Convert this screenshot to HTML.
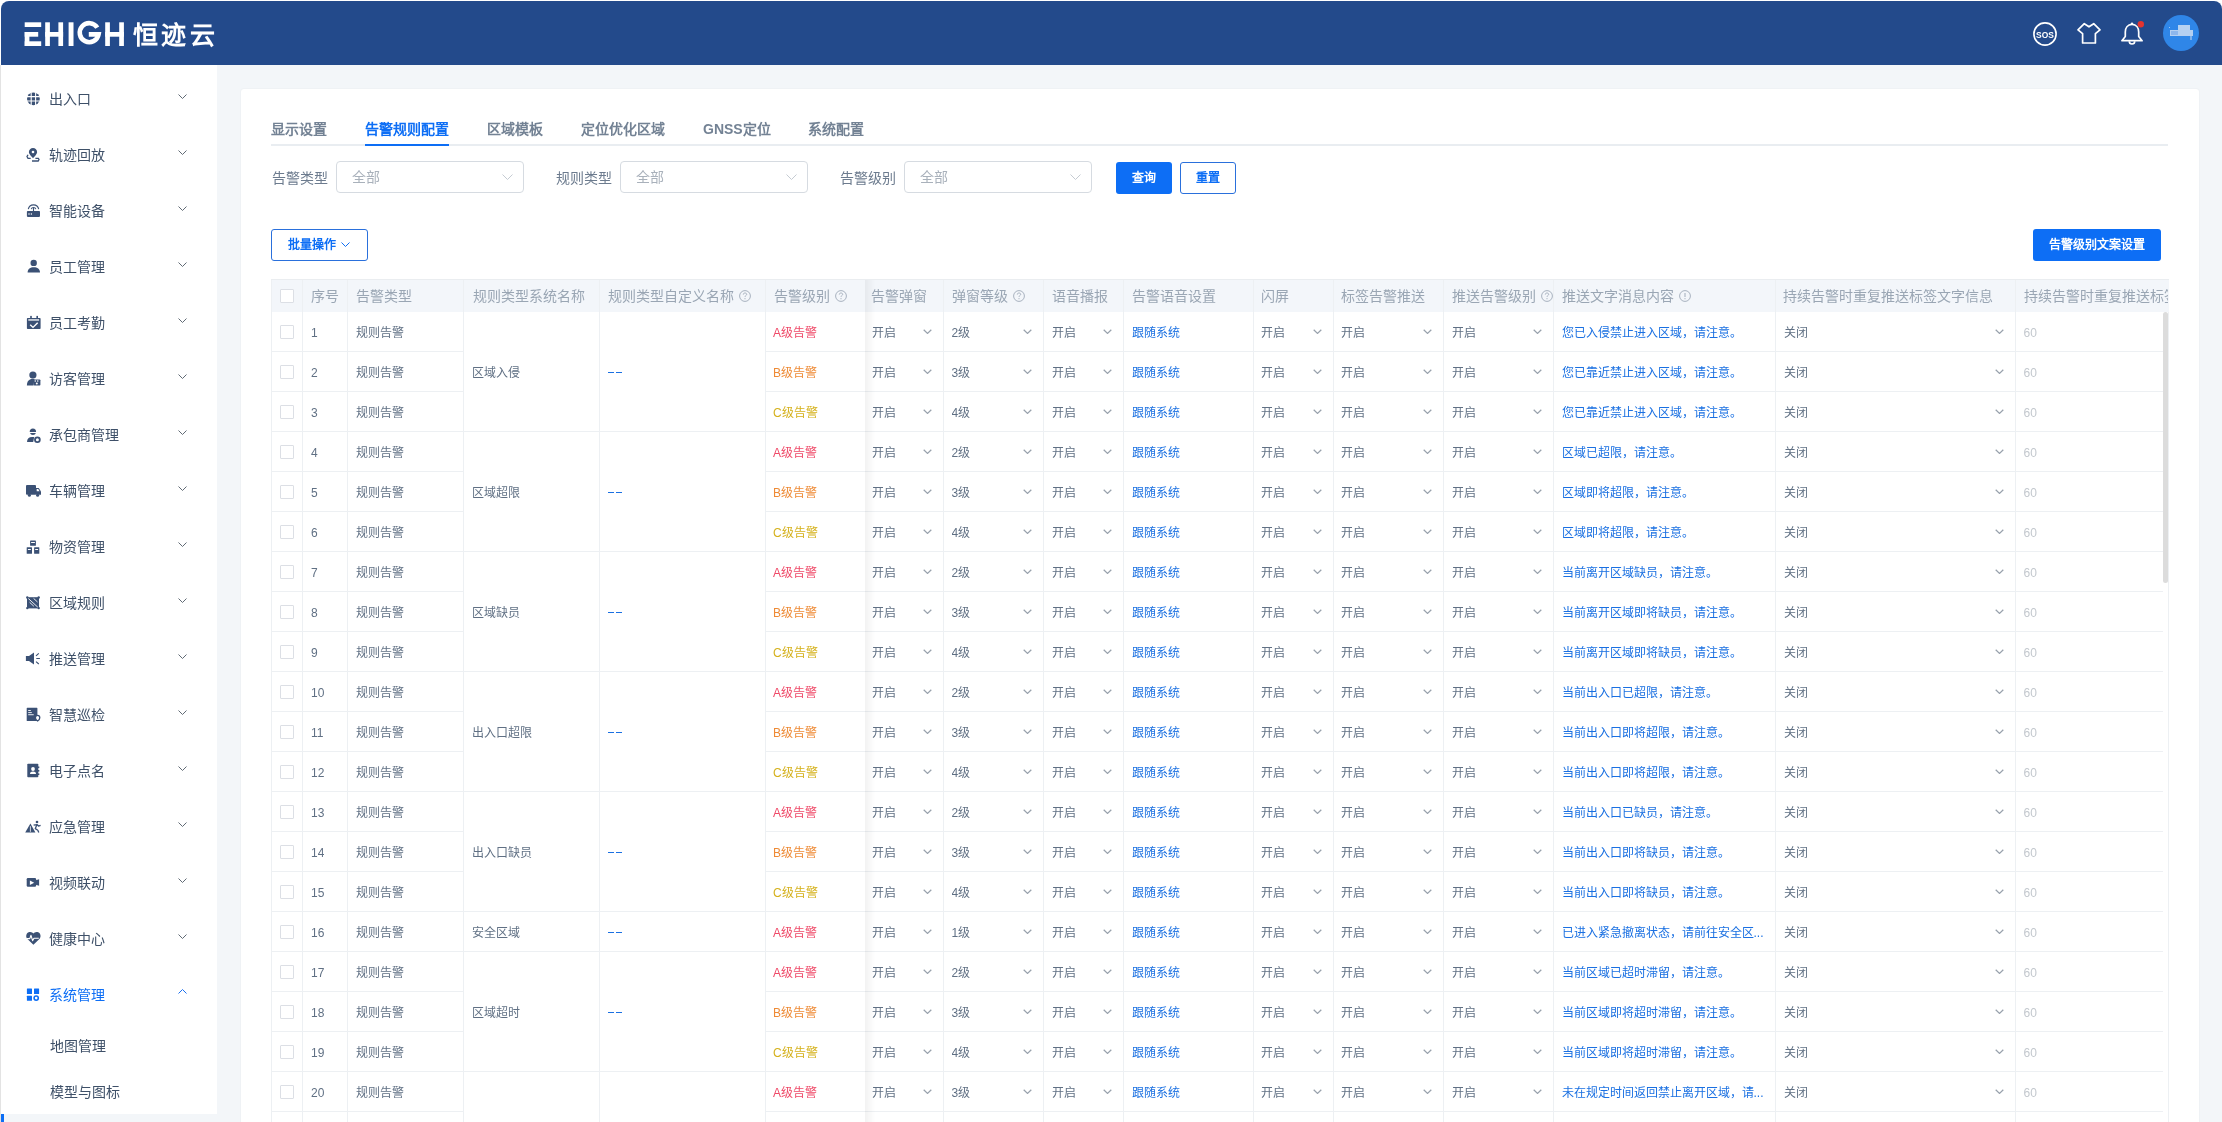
<!DOCTYPE html>
<html lang="zh-CN"><head><meta charset="utf-8"><title>告警规则配置</title><style>
*{box-sizing:border-box;margin:0;padding:0}
html,body{width:2222px;height:1122px;overflow:hidden;background:#fff;font-family:"Liberation Sans",sans-serif}
.abs{position:absolute}
.hdr{position:absolute;left:1px;top:1px;right:0;height:64px;background:#234a8b;border-radius:8px 8px 0 0}
.side{position:absolute;left:0;top:65px;width:217px;height:1049px;background:#fff;border-left:1px solid #e3e3e3}
.mainbg{position:absolute;left:0;top:65px;right:0;bottom:0;background:#f3f6f9}
.card{position:absolute;left:241px;top:89px;width:1958px;height:1100px;background:#fff;border-radius:3px;box-shadow:0 0 2px rgba(0,0,0,0.07)}
.mi{position:absolute;left:0;width:217px;height:40px;font-size:14px;line-height:40px;color:#3e5068}
.mi .t{position:absolute;left:49px;top:1px}
.mi svg.ic{position:absolute;left:26px;top:13px}
.mi svg.ch{position:absolute;left:178px;top:16px}
.tab{position:absolute;top:119px;font-size:14px;line-height:20px;color:#738294;font-weight:bold}
.lbl{position:absolute;top:168px;font-size:14px;line-height:20px;color:#6c7b8e}
.sel{position:absolute;top:161px;height:32px;width:188px;border:1px solid #d6dbe1;border-radius:4px;font-size:14px;line-height:30px;color:#a9b1bb;padding-left:15px}
.sel svg{position:absolute;right:10px;top:12px}
.btn{position:absolute;height:32px;border-radius:3px;font-size:12px;line-height:30px;font-weight:bold;text-align:center}
.th{position:absolute;top:279px;height:33px;font-size:14px;line-height:35px;color:#9aa6b4;white-space:nowrap;overflow:hidden}
.td{position:absolute;height:41px;font-size:12px;line-height:40px;padding-top:1px;color:#607084;white-space:nowrap;overflow:hidden}
.vl{position:absolute;width:1px;background:#edf0f3}
.hl{position:absolute;height:1px;background:#edf0f3}
</style></head>
<body>
<div style="position:absolute;left:0;top:0;width:2222px;height:1122px;overflow:hidden;will-change:transform">
<div class="mainbg"></div><div class="hdr"></div><svg class="abs" style="left:24px;top:20px" width="200" height="30" viewBox="0 0 200 30">
<g fill="#fff">
<rect x="0.7" y="2.3" width="16.5" height="4.7"/><rect x="0.7" y="12" width="13.5" height="4.7"/><rect x="0.7" y="21.3" width="16.5" height="4.7"/><rect x="0.7" y="12" width="4.7" height="14"/>
<rect x="21.2" y="2.3" width="4.7" height="23.7"/><rect x="34.4" y="2.3" width="4.7" height="23.7"/><rect x="21.2" y="12" width="17.9" height="4.7"/>
<rect x="44.6" y="2.3" width="4.9" height="23.7"/>
<rect x="81.2" y="2.3" width="4.7" height="23.7"/><rect x="95.2" y="2.3" width="4.7" height="23.7"/><rect x="81.2" y="12" width="18.7" height="4.7"/>
</g>
<path d="M73.3 7.6 A9.5 9.5 0 1 0 74.6 14.35 L64.8 14.35" fill="none" stroke="#fff" stroke-width="4.6"/>
<text x="109" y="23.8" font-size="25" font-weight="bold" fill="#fff" letter-spacing="3.3" font-family="Liberation Sans">恒迹云</text>
</svg>
<svg class="abs" style="left:2033px;top:22px" width="24" height="24" viewBox="0 0 24 24"><circle cx="12" cy="12" r="11.1" fill="none" stroke="#fff" stroke-width="1.6"/><text x="3.1" y="16" textLength="17.8" lengthAdjust="spacingAndGlyphs" font-size="9.6" font-weight="bold" fill="#fff" font-family="Liberation Sans">SOS</text></svg>
<svg class="abs" style="left:2075px;top:20px" width="28" height="28" viewBox="0 0 28 28"><path d="M9.3 3.7 L14 6.8 L18.7 3.7 L25 9.8 L20.4 13.6 L20.4 23 L7.6 23 L7.6 13.6 L3 9.8 Z" fill="none" stroke="#fff" stroke-width="1.7" stroke-linejoin="round"/></svg>
<svg class="abs" style="left:2118px;top:20px" width="28" height="28" viewBox="0 0 28 28"><path d="M14 4.4 C9.6 4.4 7.3 8 7.3 12 L7.3 16.5 L3.9 20.7 L24.1 20.7 L20.7 16.5 L20.7 12 C20.7 8 18.4 4.4 14 4.4 Z" fill="none" stroke="#fff" stroke-width="1.7" stroke-linejoin="round"/><path d="M11.3 21.3 A2.7 2.7 0 0 0 16.7 21.3" fill="none" stroke="#fff" stroke-width="1.7"/><circle cx="14" cy="3.6" r="1.2" fill="#fff"/><circle cx="22.8" cy="4.2" r="3.2" fill="#e5342f"/></svg>
<div class="abs" style="left:2163px;top:15px;width:36px;height:36px;border-radius:50%;background:#2f86e8;overflow:hidden">
<div class="abs" style="left:7px;top:15px;width:23px;height:6px;background:#b4cff1"></div>
<div class="abs" style="left:8px;top:16px;width:7px;height:4px;background:#8db6ec"></div>
<div class="abs" style="left:15px;top:10px;width:12px;height:5px;background:#b6d2f2"></div>
<div class="abs" style="left:27px;top:21px;width:2px;height:4px;background:#7fb0ea"></div>
<div class="abs" style="left:6px;top:12px;width:1px;height:1px;background:#9cc4f0"></div>
</div>
<div class="side"></div><svg class="abs" style="left:20px;top:84px" width="28" height="28" viewBox="20 84 28 28"><circle cx="33.4" cy="98.8" r="6.4" fill="#3b5175"/><path d="M31.2 92.5V105.1M35.6 92.5V105.1M27 96.6H39.8M27 101H39.8" stroke="#fff" stroke-width="1.1"/></svg><div class="mi" style="top:78px;color:#3e5068"><span class="t">出入口</span><svg class="ch" width="9" height="5" viewBox="0 0 9 5" style="top:16px"><path d="M0.5 0.5 L4.5 4.5 L8.5 0.5" fill="none" stroke="#606a75" stroke-width="1"/></svg></div><svg class="abs" style="left:20px;top:140px" width="28" height="28" viewBox="20 140 28 28"><path d="M33 148C30.6 148 28.9 149.8 28.9 152.1 28.9 154.6 33 158.2 33 158.2S37.1 154.6 37.1 152.1C37.1 149.8 35.4 148 33 148Z" fill="#3b5175"/><circle cx="33" cy="152" r="1.3" fill="#fff"/><path d="M28 154.8 L27 156.6 L28 158.3 L30.7 158.3 M35.4 158.3 L38.3 158.3 L39 159.6 L38.2 161 L32 161" fill="none" stroke="#3b5175" stroke-width="1.3"/></svg><div class="mi" style="top:134px;color:#3e5068"><span class="t">轨迹回放</span><svg class="ch" width="9" height="5" viewBox="0 0 9 5" style="top:16px"><path d="M0.5 0.5 L4.5 4.5 L8.5 0.5" fill="none" stroke="#606a75" stroke-width="1"/></svg></div><svg class="abs" style="left:20px;top:196px" width="28" height="28" viewBox="20 196 28 28"><path d="M28.3 209.2 A5.3 5.3 0 0 1 38.7 209.2" fill="none" stroke="#3b5175" stroke-width="1.1"/><path d="M31.2 209.2 A2.4 2.4 0 0 1 35.8 209.2" fill="none" stroke="#3b5175" stroke-width="1.1"/><path d="M33.5 208 V211.5" stroke="#3b5175" stroke-width="1.1"/><rect x="26.9" y="211" width="13.1" height="5.9" rx="0.8" fill="#3b5175"/><circle cx="29" cy="214" r="0.75" fill="#fff"/><circle cx="31.4" cy="214" r="0.75" fill="#fff"/></svg><div class="mi" style="top:190px;color:#3e5068"><span class="t">智能设备</span><svg class="ch" width="9" height="5" viewBox="0 0 9 5" style="top:16px"><path d="M0.5 0.5 L4.5 4.5 L8.5 0.5" fill="none" stroke="#606a75" stroke-width="1"/></svg></div><svg class="abs" style="left:20px;top:252px" width="28" height="28" viewBox="20 252 28 28"><circle cx="33.7" cy="262.9" r="3.2" fill="#3b5175"/><path d="M27.6 272.6 C27.6 268.9 30.3 267.2 33.8 267.2 C37.3 267.2 40 268.9 40 272.6 Z" fill="#3b5175"/></svg><div class="mi" style="top:246px;color:#3e5068"><span class="t">员工管理</span><svg class="ch" width="9" height="5" viewBox="0 0 9 5" style="top:16px"><path d="M0.5 0.5 L4.5 4.5 L8.5 0.5" fill="none" stroke="#606a75" stroke-width="1"/></svg></div><svg class="abs" style="left:20px;top:308px" width="28" height="28" viewBox="20 308 28 28"><rect x="26.9" y="317.9" width="13.7" height="11.1" rx="0.8" fill="#3b5175"/><rect x="30.2" y="315.9" width="1.6" height="2.5" fill="#3b5175"/><rect x="36.4" y="315.9" width="1.6" height="2.5" fill="#3b5175"/><rect x="28.3" y="319.3" width="10.8" height="1.3" fill="#fff"/><path d="M30.2 324.8 L33 327.4 L37.7 322.7" fill="none" stroke="#fff" stroke-width="1.4"/></svg><div class="mi" style="top:302px;color:#3e5068"><span class="t">员工考勤</span><svg class="ch" width="9" height="5" viewBox="0 0 9 5" style="top:16px"><path d="M0.5 0.5 L4.5 4.5 L8.5 0.5" fill="none" stroke="#606a75" stroke-width="1"/></svg></div><svg class="abs" style="left:20px;top:364px" width="28" height="28" viewBox="20 364 28 28"><circle cx="32.9" cy="375" r="3.6" fill="#3b5175"/><path d="M26.9 385.5 C26.9 381 29.5 378.8 33 378.8 L34.5 379 L33.5 385.5 Z" fill="#3b5175"/><rect x="33.6" y="379.4" width="6.8" height="6.1" rx="0.8" fill="#3b5175"/><rect x="34.6" y="380.4" width="1.4" height="1.2" fill="#fff"/><rect x="37" y="380.4" width="1.4" height="1.2" fill="#fff"/><circle cx="36.8" cy="383.6" r="1" fill="#fff"/></svg><div class="mi" style="top:358px;color:#3e5068"><span class="t">访客管理</span><svg class="ch" width="9" height="5" viewBox="0 0 9 5" style="top:16px"><path d="M0.5 0.5 L4.5 4.5 L8.5 0.5" fill="none" stroke="#606a75" stroke-width="1"/></svg></div><svg class="abs" style="left:20px;top:420px" width="28" height="28" viewBox="20 420 28 28"><path d="M29.7 432 A3.2 3.6 0 0 1 36.1 432 Z" fill="#3b5175"/><path d="M30 433 A3.1 3 0 0 0 35.9 433 Z" fill="#3b5175"/><path d="M27 441.9 C27 438.8 29 437 32 437 L34.2 437 L33.2 441.9 Z" fill="#3b5175"/><circle cx="37.4" cy="439.8" r="2.4" fill="none" stroke="#3b5175" stroke-width="1.8"/></svg><div class="mi" style="top:414px;color:#3e5068"><span class="t">承包商管理</span><svg class="ch" width="9" height="5" viewBox="0 0 9 5" style="top:16px"><path d="M0.5 0.5 L4.5 4.5 L8.5 0.5" fill="none" stroke="#606a75" stroke-width="1"/></svg></div><svg class="abs" style="left:20px;top:476px" width="28" height="28" viewBox="20 476 28 28"><rect x="26" y="485" width="10" height="9.7" rx="1" fill="#3b5175"/><path d="M35.5 488 L38.7 488 L41 491.5 L41 494.7 L35.5 494.7 Z" fill="#3b5175"/><path d="M36.7 489.1 L38.2 489.1 L39.6 491.3 L36.7 491.3Z" fill="#fff"/><circle cx="29.4" cy="495.3" r="1.5" fill="#3b5175"/><circle cx="37.6" cy="495.3" r="1.5" fill="#3b5175"/></svg><div class="mi" style="top:470px;color:#3e5068"><span class="t">车辆管理</span><svg class="ch" width="9" height="5" viewBox="0 0 9 5" style="top:16px"><path d="M0.5 0.5 L4.5 4.5 L8.5 0.5" fill="none" stroke="#606a75" stroke-width="1"/></svg></div><svg class="abs" style="left:20px;top:532px" width="28" height="28" viewBox="20 532 28 28"><rect x="30.1" y="540.4" width="5.8" height="5.4" rx="0.5" fill="#3b5175"/><rect x="26.7" y="547.3" width="5.3" height="6.4" rx="0.5" fill="#3b5175"/><rect x="34.1" y="547.3" width="5.2" height="6.4" rx="0.5" fill="#3b5175"/><rect x="31.1" y="542" width="3.8" height="1" fill="#fff"/><rect x="27.9" y="549" width="2.9" height="1" fill="#fff"/><rect x="35.2" y="549" width="2.9" height="1" fill="#fff"/></svg><div class="mi" style="top:526px;color:#3e5068"><span class="t">物资管理</span><svg class="ch" width="9" height="5" viewBox="0 0 9 5" style="top:16px"><path d="M0.5 0.5 L4.5 4.5 L8.5 0.5" fill="none" stroke="#606a75" stroke-width="1"/></svg></div><svg class="abs" style="left:20px;top:588px" width="28" height="28" viewBox="20 588 28 28"><rect x="27" y="597.2" width="12" height="11.2" fill="#3b5175"/><path d="M28.3 598.5 L37.8 607.2 M29.6 602.3 L33.8 606.2 M33.6 598.4 L37.5 602" stroke="#fff" stroke-width="0.9"/><circle cx="27.3" cy="597.5" r="1.2" fill="#3b5175"/><circle cx="38.7" cy="597.5" r="1.2" fill="#3b5175"/><circle cx="27.3" cy="608.1" r="1.2" fill="#3b5175"/><circle cx="38.7" cy="608.1" r="1.2" fill="#3b5175"/></svg><div class="mi" style="top:582px;color:#3e5068"><span class="t">区域规则</span><svg class="ch" width="9" height="5" viewBox="0 0 9 5" style="top:16px"><path d="M0.5 0.5 L4.5 4.5 L8.5 0.5" fill="none" stroke="#606a75" stroke-width="1"/></svg></div><svg class="abs" style="left:20px;top:644px" width="28" height="28" viewBox="20 644 28 28"><path d="M25.9 656 H29 L34 652.4 V664.6 L29 661 H25.9 Z" fill="#3b5175"/><path d="M36 655.8 L38.8 653.3 M36.3 658.5 H39.9 M36 661.6 L38.8 664" stroke="#3b5175" stroke-width="1.1"/></svg><div class="mi" style="top:638px;color:#3e5068"><span class="t">推送管理</span><svg class="ch" width="9" height="5" viewBox="0 0 9 5" style="top:16px"><path d="M0.5 0.5 L4.5 4.5 L8.5 0.5" fill="none" stroke="#606a75" stroke-width="1"/></svg></div><svg class="abs" style="left:20px;top:700px" width="28" height="28" viewBox="20 700 28 28"><rect x="26.7" y="707.8" width="10.7" height="13.2" rx="0.6" fill="#3b5175"/><rect x="28.2" y="710" width="2.6" height="0.9" fill="#fff"/><rect x="28.2" y="712.2" width="3.6" height="0.9" fill="#fff"/><rect x="28.2" y="714.3" width="5.5" height="0.9" fill="#fff"/><path d="M37.6 715.4 C36.3 715.4 35.4 716.5 35.4 717.7 C35.4 719.5 37.6 721 37.6 721 C37.6 721 39.8 719.5 39.8 717.7 C39.8 716.5 38.9 715.4 37.6 715.4Z" fill="#fff" stroke="#3b5175" stroke-width="1.3"/></svg><div class="mi" style="top:694px;color:#3e5068"><span class="t">智慧巡检</span><svg class="ch" width="9" height="5" viewBox="0 0 9 5" style="top:16px"><path d="M0.5 0.5 L4.5 4.5 L8.5 0.5" fill="none" stroke="#606a75" stroke-width="1"/></svg></div><svg class="abs" style="left:20px;top:756px" width="28" height="28" viewBox="20 756 28 28"><rect x="27.3" y="763.8" width="11" height="13.4" rx="0.8" fill="#3b5175"/><rect x="38" y="766.5" width="1.3" height="1.6" fill="#3b5175"/><rect x="38" y="770" width="1.3" height="1.6" fill="#3b5175"/><rect x="38" y="773.4" width="1.3" height="1.6" fill="#3b5175"/><circle cx="33" cy="769" r="1.9" fill="#fff"/><path d="M30 774 C30 772.3 31.3 771.6 33 771.6 C34.7 771.6 36 772.3 36 774 Z" fill="#fff"/></svg><div class="mi" style="top:750px;color:#3e5068"><span class="t">电子点名</span><svg class="ch" width="9" height="5" viewBox="0 0 9 5" style="top:16px"><path d="M0.5 0.5 L4.5 4.5 L8.5 0.5" fill="none" stroke="#606a75" stroke-width="1"/></svg></div><svg class="abs" style="left:20px;top:812px" width="28" height="28" viewBox="20 812 28 28"><path d="M25.2 832.6 L30.4 823.6 L35.4 832.6 Z" fill="#3b5175"/><path d="M30.4 826.2 V831.8" stroke="#fff" stroke-width="0.8"/><circle cx="37" cy="822" r="1.3" fill="#3b5175"/><path d="M33.6 825.2 L37 824.6 L38.5 826 L40.6 825.4 M37 824.6 L35.3 828.6 L37.8 830.2 L38.8 832.6" fill="none" stroke="#3b5175" stroke-width="1.3" stroke-linejoin="round"/></svg><div class="mi" style="top:806px;color:#3e5068"><span class="t">应急管理</span><svg class="ch" width="9" height="5" viewBox="0 0 9 5" style="top:16px"><path d="M0.5 0.5 L4.5 4.5 L8.5 0.5" fill="none" stroke="#606a75" stroke-width="1"/></svg></div><svg class="abs" style="left:20px;top:868px" width="28" height="28" viewBox="20 868 28 28"><rect x="26.7" y="878.1" width="9.4" height="8.6" rx="1.2" fill="#3b5175"/><path d="M35.6 880.2 L39.1 879.2 V885.8 L35.6 884.8 Z" fill="#3b5175"/><path d="M29.9 880.5 L34.2 882.7 L29.9 885 Z" fill="#fff"/></svg><div class="mi" style="top:862px;color:#3e5068"><span class="t">视频联动</span><svg class="ch" width="9" height="5" viewBox="0 0 9 5" style="top:16px"><path d="M0.5 0.5 L4.5 4.5 L8.5 0.5" fill="none" stroke="#606a75" stroke-width="1"/></svg></div><svg class="abs" style="left:20px;top:924px" width="28" height="28" viewBox="20 924 28 28"><path d="M33.4 944.8 L27.4 939 C25.6 937.2 25.8 933.6 28.6 932.3 C30.8 931.3 32.6 932.6 33.4 933.6 C34.2 932.6 36 931.3 38.2 932.3 C41 933.6 41.2 937.2 39.4 939 Z" fill="#3b5175"/><path d="M26.5 938.6 H29.8 L31 935.3 L32.6 940.6 L34 938.3 H38.8" fill="none" stroke="#fff" stroke-width="1.1" stroke-linejoin="round"/></svg><div class="mi" style="top:918px;color:#3e5068"><span class="t">健康中心</span><svg class="ch" width="9" height="5" viewBox="0 0 9 5" style="top:16px"><path d="M0.5 0.5 L4.5 4.5 L8.5 0.5" fill="none" stroke="#606a75" stroke-width="1"/></svg></div><svg class="abs" style="left:20px;top:980px" width="28" height="28" viewBox="20 980 28 28"><rect x="26.9" y="988.4" width="5.1" height="5.6" rx="0.5" fill="#0d6ef5"/><rect x="34" y="988.4" width="5.1" height="5.6" rx="0.5" fill="#0d6ef5"/><rect x="26.9" y="995.7" width="5.1" height="5.1" rx="0.5" fill="#0d6ef5"/><circle cx="36.2" cy="998.1" r="2.1" fill="none" stroke="#0d6ef5" stroke-width="1.6"/></svg><div class="mi" style="top:974px;color:#0d6ef5"><span class="t">系统管理</span><svg class="ch" width="9" height="5" viewBox="0 0 9 5" style="top:15px"><path d="M0.5 4.5 L4.5 0.5 L8.5 4.5" fill="none" stroke="#1a6ff0" stroke-width="1"/></svg></div><div class="mi" style="top:1025px"><span class="t" style="left:50px">地图管理</span></div><div class="mi" style="top:1071px"><span class="t" style="left:50px">模型与图标</span></div><div class="abs" style="left:1px;top:1114px;width:3px;height:8px;background:#0d6ef5"></div><div class="abs" style="left:0;top:1114px;width:1px;height:8px;background:#e3e3e3"></div><div class="card"></div><div class="abs" style="left:271px;top:144px;width:1897px;height:2px;background:#e9edf1"></div><div class="tab" style="left:271px;color:#738294">显示设置</div><div class="tab" style="left:365px;color:#0d6ef5">告警规则配置</div><div class="tab" style="left:487px;color:#738294">区域模板</div><div class="tab" style="left:581px;color:#738294">定位优化区域</div><div class="tab" style="left:703px;color:#738294">GNSS定位</div><div class="tab" style="left:808px;color:#738294">系统配置</div><div class="abs" style="left:365px;top:144px;width:84px;height:2px;background:#0d6ef5"></div><div class="lbl" style="left:272px">告警类型</div><div class="sel" style="left:336px">全部<svg width="11" height="6" viewBox="0 0 11 6" style="position:absolute;right:10px;top:12px"><path d="M0.5 0.5 L5.5 5.5 L10.5 0.5" fill="none" stroke="#c5cbd2" stroke-width="1"/></svg></div><div class="lbl" style="left:556px">规则类型</div><div class="sel" style="left:620px">全部<svg width="11" height="6" viewBox="0 0 11 6" style="position:absolute;right:10px;top:12px"><path d="M0.5 0.5 L5.5 5.5 L10.5 0.5" fill="none" stroke="#c5cbd2" stroke-width="1"/></svg></div><div class="lbl" style="left:840px">告警级别</div><div class="sel" style="left:904px">全部<svg width="11" height="6" viewBox="0 0 11 6" style="position:absolute;right:10px;top:12px"><path d="M0.5 0.5 L5.5 5.5 L10.5 0.5" fill="none" stroke="#c5cbd2" stroke-width="1"/></svg></div><div class="btn" style="left:1116px;top:162px;width:56px;background:#0d6ef5;color:#fff;line-height:32px">查询</div><div class="btn" style="left:1180px;top:162px;width:56px;border:1px solid #2a70dc;color:#0d6ef5">重置</div><div class="btn" style="left:271px;top:229px;width:97px;border:1px solid #2a70dc;color:#0d6ef5;text-align:left;padding-left:16px">批量操作<svg width="9" height="5" viewBox="0 0 9 5" style="position:absolute;left:69px;top:12px"><path d="M0.5 0.5 L4.5 4.5 L8.5 0.5" fill="none" stroke="#0d6ef5" stroke-width="1"/></svg></div><div class="btn" style="left:2033px;top:229px;width:128px;background:#0d6ef5;color:#fff;line-height:32px">告警级别文案设置</div><div class="abs" style="left:271px;top:279px;width:1897.5px;height:32.5px;background:#f3f6fa"></div><div class="abs" style="left:280px;top:289px;width:14px;height:14px;border:1px solid #dcdfe5;background:#fff;border-radius:1px"></div><div class="th" style="left:311px;width:36px">序号</div><div class="th" style="left:356px;width:107.5px">告警类型</div><div class="th" style="left:472.5px;width:126.79999999999995px">规则类型系统名称</div><div class="th" style="left:608.3px;width:156.70000000000005px">规则类型自定义名称<svg width="12" height="12" viewBox="0 0 12 12" style="position:relative;top:1px;margin-left:5px"><circle cx="6" cy="6" r="5.4" fill="none" stroke="#a8b2bf" stroke-width="1"/><path d="M4.3 4.6 C4.3 3.5 5 3 6 3 C7 3 7.7 3.6 7.7 4.4 C7.7 5.5 6 5.6 6 6.8" fill="none" stroke="#a8b2bf" stroke-width="1"/><circle cx="6" cy="8.7" r="0.6" fill="#a8b2bf"/></svg></div><div class="th" style="left:774px;width:91.70000000000005px">告警级别<svg width="12" height="12" viewBox="0 0 12 12" style="position:relative;top:1px;margin-left:5px"><circle cx="6" cy="6" r="5.4" fill="none" stroke="#a8b2bf" stroke-width="1"/><path d="M4.3 4.6 C4.3 3.5 5 3 6 3 C7 3 7.7 3.6 7.7 4.4 C7.7 5.5 6 5.6 6 6.8" fill="none" stroke="#a8b2bf" stroke-width="1"/><circle cx="6" cy="8.7" r="0.6" fill="#a8b2bf"/></svg></div><div class="th" style="left:871.2px;width:72.29999999999995px">告警弹窗</div><div class="th" style="left:951.5px;width:92.40000000000009px">弹窗等级<svg width="12" height="12" viewBox="0 0 12 12" style="position:relative;top:1px;margin-left:5px"><circle cx="6" cy="6" r="5.4" fill="none" stroke="#a8b2bf" stroke-width="1"/><path d="M4.3 4.6 C4.3 3.5 5 3 6 3 C7 3 7.7 3.6 7.7 4.4 C7.7 5.5 6 5.6 6 6.8" fill="none" stroke="#a8b2bf" stroke-width="1"/><circle cx="6" cy="8.7" r="0.6" fill="#a8b2bf"/></svg></div><div class="th" style="left:1051.9px;width:71.69999999999982px">语音播报</div><div class="th" style="left:1131.6px;width:121.80000000000018px">告警语音设置</div><div class="th" style="left:1261.4px;width:71.59999999999991px">闪屏</div><div class="th" style="left:1341px;width:102.5px">标签告警推送</div><div class="th" style="left:1451.5px;width:102.0px">推送告警级别<svg width="12" height="12" viewBox="0 0 12 12" style="position:relative;top:1px;margin-left:5px"><circle cx="6" cy="6" r="5.4" fill="none" stroke="#a8b2bf" stroke-width="1"/><path d="M4.3 4.6 C4.3 3.5 5 3 6 3 C7 3 7.7 3.6 7.7 4.4 C7.7 5.5 6 5.6 6 6.8" fill="none" stroke="#a8b2bf" stroke-width="1"/><circle cx="6" cy="8.7" r="0.6" fill="#a8b2bf"/></svg></div><div class="th" style="left:1561.5px;width:213.5px">推送文字消息内容<svg width="12" height="12" viewBox="0 0 12 12" style="position:relative;top:1px;margin-left:5px"><circle cx="6" cy="6" r="5.4" fill="none" stroke="#a8b2bf" stroke-width="1"/><path d="M6 3 V7" stroke="#a8b2bf" stroke-width="1.1"/><circle cx="6" cy="8.7" r="0.6" fill="#a8b2bf"/></svg></div><div class="th" style="left:1783px;width:232.5999999999999px">持续告警时重复推送标签文字信息</div><div class="th" style="left:2023.6px;width:144.9000000000001px">持续告警时重复推送标签文字信息</div><div class="abs" style="left:280px;top:324.5px;width:14px;height:14px;border:1px solid #dcdfe5;background:#fff;border-radius:1px"></div><div class="td" style="left:311px;top:311.5px">1</div><div class="td" style="left:356px;top:311.5px">规则告警</div><div class="td" style="left:472px;top:351.5px">区域入侵</div><div class="abs" style="left:608.3px;top:372.1px;width:6.2px;height:1.4px;background:#1a70e2"></div><div class="abs" style="left:616px;top:372.1px;width:6px;height:1.4px;background:#1a70e2"></div><div class="td" style="left:773px;top:311.5px;color:#ef4a68">A级告警</div><div class="td" style="left:872.2px;top:311.5px;width:68.79999999999995px;color:#607084">开启</div><svg class="abs" style="left:923.0px;top:329.0px" width="9" height="5" viewBox="0 0 9 5"><path d="M0.7 0.7 L4.5 4.4 L8.3 0.7" fill="none" stroke="#98a1ac" stroke-width="1.25"/></svg><div class="td" style="left:951.5px;top:311.5px;width:91.40000000000009px;color:#607084">2级</div><svg class="abs" style="left:1023.4000000000001px;top:329.0px" width="9" height="5" viewBox="0 0 9 5"><path d="M0.7 0.7 L4.5 4.4 L8.3 0.7" fill="none" stroke="#98a1ac" stroke-width="1.25"/></svg><div class="td" style="left:1051.9px;top:311.5px;width:70.69999999999982px;color:#607084">开启</div><svg class="abs" style="left:1103.1px;top:329.0px" width="9" height="5" viewBox="0 0 9 5"><path d="M0.7 0.7 L4.5 4.4 L8.3 0.7" fill="none" stroke="#98a1ac" stroke-width="1.25"/></svg><div class="td" style="left:1131.6px;top:311.5px;color:#1a70e2">跟随系统</div><div class="td" style="left:1261.4px;top:311.5px;width:70.59999999999991px;color:#607084">开启</div><svg class="abs" style="left:1312.5px;top:329.0px" width="9" height="5" viewBox="0 0 9 5"><path d="M0.7 0.7 L4.5 4.4 L8.3 0.7" fill="none" stroke="#98a1ac" stroke-width="1.25"/></svg><div class="td" style="left:1341px;top:311.5px;width:101.5px;color:#607084">开启</div><svg class="abs" style="left:1423.0px;top:329.0px" width="9" height="5" viewBox="0 0 9 5"><path d="M0.7 0.7 L4.5 4.4 L8.3 0.7" fill="none" stroke="#98a1ac" stroke-width="1.25"/></svg><div class="td" style="left:1451.5px;top:311.5px;width:101.0px;color:#607084">开启</div><svg class="abs" style="left:1533.0px;top:329.0px" width="9" height="5" viewBox="0 0 9 5"><path d="M0.7 0.7 L4.5 4.4 L8.3 0.7" fill="none" stroke="#98a1ac" stroke-width="1.25"/></svg><div class="td" style="left:1561.5px;top:311.5px;color:#1a70e2">您已入侵禁止进入区域，请注意。</div><div class="td" style="left:1784px;top:311.5px;width:231.5999999999999px;color:#607084">关闭</div><svg class="abs" style="left:1995.1px;top:329.0px" width="9" height="5" viewBox="0 0 9 5"><path d="M0.7 0.7 L4.5 4.4 L8.3 0.7" fill="none" stroke="#98a1ac" stroke-width="1.25"/></svg><div class="td" style="left:2023.6px;top:311.5px;color:#c3c8ce">60</div><div class="hl" style="left:271px;top:350.5px;width:192.5px"></div><div class="hl" style="left:765px;top:350.5px;width:1398px"></div><div class="abs" style="left:280px;top:364.5px;width:14px;height:14px;border:1px solid #dcdfe5;background:#fff;border-radius:1px"></div><div class="td" style="left:311px;top:351.5px">2</div><div class="td" style="left:356px;top:351.5px">规则告警</div><div class="td" style="left:773px;top:351.5px;color:#ee8a35">B级告警</div><div class="td" style="left:872.2px;top:351.5px;width:68.79999999999995px;color:#607084">开启</div><svg class="abs" style="left:923.0px;top:369.0px" width="9" height="5" viewBox="0 0 9 5"><path d="M0.7 0.7 L4.5 4.4 L8.3 0.7" fill="none" stroke="#98a1ac" stroke-width="1.25"/></svg><div class="td" style="left:951.5px;top:351.5px;width:91.40000000000009px;color:#607084">3级</div><svg class="abs" style="left:1023.4000000000001px;top:369.0px" width="9" height="5" viewBox="0 0 9 5"><path d="M0.7 0.7 L4.5 4.4 L8.3 0.7" fill="none" stroke="#98a1ac" stroke-width="1.25"/></svg><div class="td" style="left:1051.9px;top:351.5px;width:70.69999999999982px;color:#607084">开启</div><svg class="abs" style="left:1103.1px;top:369.0px" width="9" height="5" viewBox="0 0 9 5"><path d="M0.7 0.7 L4.5 4.4 L8.3 0.7" fill="none" stroke="#98a1ac" stroke-width="1.25"/></svg><div class="td" style="left:1131.6px;top:351.5px;color:#1a70e2">跟随系统</div><div class="td" style="left:1261.4px;top:351.5px;width:70.59999999999991px;color:#607084">开启</div><svg class="abs" style="left:1312.5px;top:369.0px" width="9" height="5" viewBox="0 0 9 5"><path d="M0.7 0.7 L4.5 4.4 L8.3 0.7" fill="none" stroke="#98a1ac" stroke-width="1.25"/></svg><div class="td" style="left:1341px;top:351.5px;width:101.5px;color:#607084">开启</div><svg class="abs" style="left:1423.0px;top:369.0px" width="9" height="5" viewBox="0 0 9 5"><path d="M0.7 0.7 L4.5 4.4 L8.3 0.7" fill="none" stroke="#98a1ac" stroke-width="1.25"/></svg><div class="td" style="left:1451.5px;top:351.5px;width:101.0px;color:#607084">开启</div><svg class="abs" style="left:1533.0px;top:369.0px" width="9" height="5" viewBox="0 0 9 5"><path d="M0.7 0.7 L4.5 4.4 L8.3 0.7" fill="none" stroke="#98a1ac" stroke-width="1.25"/></svg><div class="td" style="left:1561.5px;top:351.5px;color:#1a70e2">您已靠近禁止进入区域，请注意。</div><div class="td" style="left:1784px;top:351.5px;width:231.5999999999999px;color:#607084">关闭</div><svg class="abs" style="left:1995.1px;top:369.0px" width="9" height="5" viewBox="0 0 9 5"><path d="M0.7 0.7 L4.5 4.4 L8.3 0.7" fill="none" stroke="#98a1ac" stroke-width="1.25"/></svg><div class="td" style="left:2023.6px;top:351.5px;color:#c3c8ce">60</div><div class="hl" style="left:271px;top:390.5px;width:192.5px"></div><div class="hl" style="left:765px;top:390.5px;width:1398px"></div><div class="abs" style="left:280px;top:404.5px;width:14px;height:14px;border:1px solid #dcdfe5;background:#fff;border-radius:1px"></div><div class="td" style="left:311px;top:391.5px">3</div><div class="td" style="left:356px;top:391.5px">规则告警</div><div class="td" style="left:773px;top:391.5px;color:#d5b11c">C级告警</div><div class="td" style="left:872.2px;top:391.5px;width:68.79999999999995px;color:#607084">开启</div><svg class="abs" style="left:923.0px;top:409.0px" width="9" height="5" viewBox="0 0 9 5"><path d="M0.7 0.7 L4.5 4.4 L8.3 0.7" fill="none" stroke="#98a1ac" stroke-width="1.25"/></svg><div class="td" style="left:951.5px;top:391.5px;width:91.40000000000009px;color:#607084">4级</div><svg class="abs" style="left:1023.4000000000001px;top:409.0px" width="9" height="5" viewBox="0 0 9 5"><path d="M0.7 0.7 L4.5 4.4 L8.3 0.7" fill="none" stroke="#98a1ac" stroke-width="1.25"/></svg><div class="td" style="left:1051.9px;top:391.5px;width:70.69999999999982px;color:#607084">开启</div><svg class="abs" style="left:1103.1px;top:409.0px" width="9" height="5" viewBox="0 0 9 5"><path d="M0.7 0.7 L4.5 4.4 L8.3 0.7" fill="none" stroke="#98a1ac" stroke-width="1.25"/></svg><div class="td" style="left:1131.6px;top:391.5px;color:#1a70e2">跟随系统</div><div class="td" style="left:1261.4px;top:391.5px;width:70.59999999999991px;color:#607084">开启</div><svg class="abs" style="left:1312.5px;top:409.0px" width="9" height="5" viewBox="0 0 9 5"><path d="M0.7 0.7 L4.5 4.4 L8.3 0.7" fill="none" stroke="#98a1ac" stroke-width="1.25"/></svg><div class="td" style="left:1341px;top:391.5px;width:101.5px;color:#607084">开启</div><svg class="abs" style="left:1423.0px;top:409.0px" width="9" height="5" viewBox="0 0 9 5"><path d="M0.7 0.7 L4.5 4.4 L8.3 0.7" fill="none" stroke="#98a1ac" stroke-width="1.25"/></svg><div class="td" style="left:1451.5px;top:391.5px;width:101.0px;color:#607084">开启</div><svg class="abs" style="left:1533.0px;top:409.0px" width="9" height="5" viewBox="0 0 9 5"><path d="M0.7 0.7 L4.5 4.4 L8.3 0.7" fill="none" stroke="#98a1ac" stroke-width="1.25"/></svg><div class="td" style="left:1561.5px;top:391.5px;color:#1a70e2">您已靠近禁止进入区域，请注意。</div><div class="td" style="left:1784px;top:391.5px;width:231.5999999999999px;color:#607084">关闭</div><svg class="abs" style="left:1995.1px;top:409.0px" width="9" height="5" viewBox="0 0 9 5"><path d="M0.7 0.7 L4.5 4.4 L8.3 0.7" fill="none" stroke="#98a1ac" stroke-width="1.25"/></svg><div class="td" style="left:2023.6px;top:391.5px;color:#c3c8ce">60</div><div class="hl" style="left:271px;top:430.5px;width:1892px"></div><div class="abs" style="left:280px;top:444.5px;width:14px;height:14px;border:1px solid #dcdfe5;background:#fff;border-radius:1px"></div><div class="td" style="left:311px;top:431.5px">4</div><div class="td" style="left:356px;top:431.5px">规则告警</div><div class="td" style="left:472px;top:471.5px">区域超限</div><div class="abs" style="left:608.3px;top:492.1px;width:6.2px;height:1.4px;background:#1a70e2"></div><div class="abs" style="left:616px;top:492.1px;width:6px;height:1.4px;background:#1a70e2"></div><div class="td" style="left:773px;top:431.5px;color:#ef4a68">A级告警</div><div class="td" style="left:872.2px;top:431.5px;width:68.79999999999995px;color:#607084">开启</div><svg class="abs" style="left:923.0px;top:449.0px" width="9" height="5" viewBox="0 0 9 5"><path d="M0.7 0.7 L4.5 4.4 L8.3 0.7" fill="none" stroke="#98a1ac" stroke-width="1.25"/></svg><div class="td" style="left:951.5px;top:431.5px;width:91.40000000000009px;color:#607084">2级</div><svg class="abs" style="left:1023.4000000000001px;top:449.0px" width="9" height="5" viewBox="0 0 9 5"><path d="M0.7 0.7 L4.5 4.4 L8.3 0.7" fill="none" stroke="#98a1ac" stroke-width="1.25"/></svg><div class="td" style="left:1051.9px;top:431.5px;width:70.69999999999982px;color:#607084">开启</div><svg class="abs" style="left:1103.1px;top:449.0px" width="9" height="5" viewBox="0 0 9 5"><path d="M0.7 0.7 L4.5 4.4 L8.3 0.7" fill="none" stroke="#98a1ac" stroke-width="1.25"/></svg><div class="td" style="left:1131.6px;top:431.5px;color:#1a70e2">跟随系统</div><div class="td" style="left:1261.4px;top:431.5px;width:70.59999999999991px;color:#607084">开启</div><svg class="abs" style="left:1312.5px;top:449.0px" width="9" height="5" viewBox="0 0 9 5"><path d="M0.7 0.7 L4.5 4.4 L8.3 0.7" fill="none" stroke="#98a1ac" stroke-width="1.25"/></svg><div class="td" style="left:1341px;top:431.5px;width:101.5px;color:#607084">开启</div><svg class="abs" style="left:1423.0px;top:449.0px" width="9" height="5" viewBox="0 0 9 5"><path d="M0.7 0.7 L4.5 4.4 L8.3 0.7" fill="none" stroke="#98a1ac" stroke-width="1.25"/></svg><div class="td" style="left:1451.5px;top:431.5px;width:101.0px;color:#607084">开启</div><svg class="abs" style="left:1533.0px;top:449.0px" width="9" height="5" viewBox="0 0 9 5"><path d="M0.7 0.7 L4.5 4.4 L8.3 0.7" fill="none" stroke="#98a1ac" stroke-width="1.25"/></svg><div class="td" style="left:1561.5px;top:431.5px;color:#1a70e2">区域已超限，请注意。</div><div class="td" style="left:1784px;top:431.5px;width:231.5999999999999px;color:#607084">关闭</div><svg class="abs" style="left:1995.1px;top:449.0px" width="9" height="5" viewBox="0 0 9 5"><path d="M0.7 0.7 L4.5 4.4 L8.3 0.7" fill="none" stroke="#98a1ac" stroke-width="1.25"/></svg><div class="td" style="left:2023.6px;top:431.5px;color:#c3c8ce">60</div><div class="hl" style="left:271px;top:470.5px;width:192.5px"></div><div class="hl" style="left:765px;top:470.5px;width:1398px"></div><div class="abs" style="left:280px;top:484.5px;width:14px;height:14px;border:1px solid #dcdfe5;background:#fff;border-radius:1px"></div><div class="td" style="left:311px;top:471.5px">5</div><div class="td" style="left:356px;top:471.5px">规则告警</div><div class="td" style="left:773px;top:471.5px;color:#ee8a35">B级告警</div><div class="td" style="left:872.2px;top:471.5px;width:68.79999999999995px;color:#607084">开启</div><svg class="abs" style="left:923.0px;top:489.0px" width="9" height="5" viewBox="0 0 9 5"><path d="M0.7 0.7 L4.5 4.4 L8.3 0.7" fill="none" stroke="#98a1ac" stroke-width="1.25"/></svg><div class="td" style="left:951.5px;top:471.5px;width:91.40000000000009px;color:#607084">3级</div><svg class="abs" style="left:1023.4000000000001px;top:489.0px" width="9" height="5" viewBox="0 0 9 5"><path d="M0.7 0.7 L4.5 4.4 L8.3 0.7" fill="none" stroke="#98a1ac" stroke-width="1.25"/></svg><div class="td" style="left:1051.9px;top:471.5px;width:70.69999999999982px;color:#607084">开启</div><svg class="abs" style="left:1103.1px;top:489.0px" width="9" height="5" viewBox="0 0 9 5"><path d="M0.7 0.7 L4.5 4.4 L8.3 0.7" fill="none" stroke="#98a1ac" stroke-width="1.25"/></svg><div class="td" style="left:1131.6px;top:471.5px;color:#1a70e2">跟随系统</div><div class="td" style="left:1261.4px;top:471.5px;width:70.59999999999991px;color:#607084">开启</div><svg class="abs" style="left:1312.5px;top:489.0px" width="9" height="5" viewBox="0 0 9 5"><path d="M0.7 0.7 L4.5 4.4 L8.3 0.7" fill="none" stroke="#98a1ac" stroke-width="1.25"/></svg><div class="td" style="left:1341px;top:471.5px;width:101.5px;color:#607084">开启</div><svg class="abs" style="left:1423.0px;top:489.0px" width="9" height="5" viewBox="0 0 9 5"><path d="M0.7 0.7 L4.5 4.4 L8.3 0.7" fill="none" stroke="#98a1ac" stroke-width="1.25"/></svg><div class="td" style="left:1451.5px;top:471.5px;width:101.0px;color:#607084">开启</div><svg class="abs" style="left:1533.0px;top:489.0px" width="9" height="5" viewBox="0 0 9 5"><path d="M0.7 0.7 L4.5 4.4 L8.3 0.7" fill="none" stroke="#98a1ac" stroke-width="1.25"/></svg><div class="td" style="left:1561.5px;top:471.5px;color:#1a70e2">区域即将超限，请注意。</div><div class="td" style="left:1784px;top:471.5px;width:231.5999999999999px;color:#607084">关闭</div><svg class="abs" style="left:1995.1px;top:489.0px" width="9" height="5" viewBox="0 0 9 5"><path d="M0.7 0.7 L4.5 4.4 L8.3 0.7" fill="none" stroke="#98a1ac" stroke-width="1.25"/></svg><div class="td" style="left:2023.6px;top:471.5px;color:#c3c8ce">60</div><div class="hl" style="left:271px;top:510.5px;width:192.5px"></div><div class="hl" style="left:765px;top:510.5px;width:1398px"></div><div class="abs" style="left:280px;top:524.5px;width:14px;height:14px;border:1px solid #dcdfe5;background:#fff;border-radius:1px"></div><div class="td" style="left:311px;top:511.5px">6</div><div class="td" style="left:356px;top:511.5px">规则告警</div><div class="td" style="left:773px;top:511.5px;color:#d5b11c">C级告警</div><div class="td" style="left:872.2px;top:511.5px;width:68.79999999999995px;color:#607084">开启</div><svg class="abs" style="left:923.0px;top:529.0px" width="9" height="5" viewBox="0 0 9 5"><path d="M0.7 0.7 L4.5 4.4 L8.3 0.7" fill="none" stroke="#98a1ac" stroke-width="1.25"/></svg><div class="td" style="left:951.5px;top:511.5px;width:91.40000000000009px;color:#607084">4级</div><svg class="abs" style="left:1023.4000000000001px;top:529.0px" width="9" height="5" viewBox="0 0 9 5"><path d="M0.7 0.7 L4.5 4.4 L8.3 0.7" fill="none" stroke="#98a1ac" stroke-width="1.25"/></svg><div class="td" style="left:1051.9px;top:511.5px;width:70.69999999999982px;color:#607084">开启</div><svg class="abs" style="left:1103.1px;top:529.0px" width="9" height="5" viewBox="0 0 9 5"><path d="M0.7 0.7 L4.5 4.4 L8.3 0.7" fill="none" stroke="#98a1ac" stroke-width="1.25"/></svg><div class="td" style="left:1131.6px;top:511.5px;color:#1a70e2">跟随系统</div><div class="td" style="left:1261.4px;top:511.5px;width:70.59999999999991px;color:#607084">开启</div><svg class="abs" style="left:1312.5px;top:529.0px" width="9" height="5" viewBox="0 0 9 5"><path d="M0.7 0.7 L4.5 4.4 L8.3 0.7" fill="none" stroke="#98a1ac" stroke-width="1.25"/></svg><div class="td" style="left:1341px;top:511.5px;width:101.5px;color:#607084">开启</div><svg class="abs" style="left:1423.0px;top:529.0px" width="9" height="5" viewBox="0 0 9 5"><path d="M0.7 0.7 L4.5 4.4 L8.3 0.7" fill="none" stroke="#98a1ac" stroke-width="1.25"/></svg><div class="td" style="left:1451.5px;top:511.5px;width:101.0px;color:#607084">开启</div><svg class="abs" style="left:1533.0px;top:529.0px" width="9" height="5" viewBox="0 0 9 5"><path d="M0.7 0.7 L4.5 4.4 L8.3 0.7" fill="none" stroke="#98a1ac" stroke-width="1.25"/></svg><div class="td" style="left:1561.5px;top:511.5px;color:#1a70e2">区域即将超限，请注意。</div><div class="td" style="left:1784px;top:511.5px;width:231.5999999999999px;color:#607084">关闭</div><svg class="abs" style="left:1995.1px;top:529.0px" width="9" height="5" viewBox="0 0 9 5"><path d="M0.7 0.7 L4.5 4.4 L8.3 0.7" fill="none" stroke="#98a1ac" stroke-width="1.25"/></svg><div class="td" style="left:2023.6px;top:511.5px;color:#c3c8ce">60</div><div class="hl" style="left:271px;top:550.5px;width:1892px"></div><div class="abs" style="left:280px;top:564.5px;width:14px;height:14px;border:1px solid #dcdfe5;background:#fff;border-radius:1px"></div><div class="td" style="left:311px;top:551.5px">7</div><div class="td" style="left:356px;top:551.5px">规则告警</div><div class="td" style="left:472px;top:591.5px">区域缺员</div><div class="abs" style="left:608.3px;top:612.1px;width:6.2px;height:1.4px;background:#1a70e2"></div><div class="abs" style="left:616px;top:612.1px;width:6px;height:1.4px;background:#1a70e2"></div><div class="td" style="left:773px;top:551.5px;color:#ef4a68">A级告警</div><div class="td" style="left:872.2px;top:551.5px;width:68.79999999999995px;color:#607084">开启</div><svg class="abs" style="left:923.0px;top:569.0px" width="9" height="5" viewBox="0 0 9 5"><path d="M0.7 0.7 L4.5 4.4 L8.3 0.7" fill="none" stroke="#98a1ac" stroke-width="1.25"/></svg><div class="td" style="left:951.5px;top:551.5px;width:91.40000000000009px;color:#607084">2级</div><svg class="abs" style="left:1023.4000000000001px;top:569.0px" width="9" height="5" viewBox="0 0 9 5"><path d="M0.7 0.7 L4.5 4.4 L8.3 0.7" fill="none" stroke="#98a1ac" stroke-width="1.25"/></svg><div class="td" style="left:1051.9px;top:551.5px;width:70.69999999999982px;color:#607084">开启</div><svg class="abs" style="left:1103.1px;top:569.0px" width="9" height="5" viewBox="0 0 9 5"><path d="M0.7 0.7 L4.5 4.4 L8.3 0.7" fill="none" stroke="#98a1ac" stroke-width="1.25"/></svg><div class="td" style="left:1131.6px;top:551.5px;color:#1a70e2">跟随系统</div><div class="td" style="left:1261.4px;top:551.5px;width:70.59999999999991px;color:#607084">开启</div><svg class="abs" style="left:1312.5px;top:569.0px" width="9" height="5" viewBox="0 0 9 5"><path d="M0.7 0.7 L4.5 4.4 L8.3 0.7" fill="none" stroke="#98a1ac" stroke-width="1.25"/></svg><div class="td" style="left:1341px;top:551.5px;width:101.5px;color:#607084">开启</div><svg class="abs" style="left:1423.0px;top:569.0px" width="9" height="5" viewBox="0 0 9 5"><path d="M0.7 0.7 L4.5 4.4 L8.3 0.7" fill="none" stroke="#98a1ac" stroke-width="1.25"/></svg><div class="td" style="left:1451.5px;top:551.5px;width:101.0px;color:#607084">开启</div><svg class="abs" style="left:1533.0px;top:569.0px" width="9" height="5" viewBox="0 0 9 5"><path d="M0.7 0.7 L4.5 4.4 L8.3 0.7" fill="none" stroke="#98a1ac" stroke-width="1.25"/></svg><div class="td" style="left:1561.5px;top:551.5px;color:#1a70e2">当前离开区域缺员，请注意。</div><div class="td" style="left:1784px;top:551.5px;width:231.5999999999999px;color:#607084">关闭</div><svg class="abs" style="left:1995.1px;top:569.0px" width="9" height="5" viewBox="0 0 9 5"><path d="M0.7 0.7 L4.5 4.4 L8.3 0.7" fill="none" stroke="#98a1ac" stroke-width="1.25"/></svg><div class="td" style="left:2023.6px;top:551.5px;color:#c3c8ce">60</div><div class="hl" style="left:271px;top:590.5px;width:192.5px"></div><div class="hl" style="left:765px;top:590.5px;width:1398px"></div><div class="abs" style="left:280px;top:604.5px;width:14px;height:14px;border:1px solid #dcdfe5;background:#fff;border-radius:1px"></div><div class="td" style="left:311px;top:591.5px">8</div><div class="td" style="left:356px;top:591.5px">规则告警</div><div class="td" style="left:773px;top:591.5px;color:#ee8a35">B级告警</div><div class="td" style="left:872.2px;top:591.5px;width:68.79999999999995px;color:#607084">开启</div><svg class="abs" style="left:923.0px;top:609.0px" width="9" height="5" viewBox="0 0 9 5"><path d="M0.7 0.7 L4.5 4.4 L8.3 0.7" fill="none" stroke="#98a1ac" stroke-width="1.25"/></svg><div class="td" style="left:951.5px;top:591.5px;width:91.40000000000009px;color:#607084">3级</div><svg class="abs" style="left:1023.4000000000001px;top:609.0px" width="9" height="5" viewBox="0 0 9 5"><path d="M0.7 0.7 L4.5 4.4 L8.3 0.7" fill="none" stroke="#98a1ac" stroke-width="1.25"/></svg><div class="td" style="left:1051.9px;top:591.5px;width:70.69999999999982px;color:#607084">开启</div><svg class="abs" style="left:1103.1px;top:609.0px" width="9" height="5" viewBox="0 0 9 5"><path d="M0.7 0.7 L4.5 4.4 L8.3 0.7" fill="none" stroke="#98a1ac" stroke-width="1.25"/></svg><div class="td" style="left:1131.6px;top:591.5px;color:#1a70e2">跟随系统</div><div class="td" style="left:1261.4px;top:591.5px;width:70.59999999999991px;color:#607084">开启</div><svg class="abs" style="left:1312.5px;top:609.0px" width="9" height="5" viewBox="0 0 9 5"><path d="M0.7 0.7 L4.5 4.4 L8.3 0.7" fill="none" stroke="#98a1ac" stroke-width="1.25"/></svg><div class="td" style="left:1341px;top:591.5px;width:101.5px;color:#607084">开启</div><svg class="abs" style="left:1423.0px;top:609.0px" width="9" height="5" viewBox="0 0 9 5"><path d="M0.7 0.7 L4.5 4.4 L8.3 0.7" fill="none" stroke="#98a1ac" stroke-width="1.25"/></svg><div class="td" style="left:1451.5px;top:591.5px;width:101.0px;color:#607084">开启</div><svg class="abs" style="left:1533.0px;top:609.0px" width="9" height="5" viewBox="0 0 9 5"><path d="M0.7 0.7 L4.5 4.4 L8.3 0.7" fill="none" stroke="#98a1ac" stroke-width="1.25"/></svg><div class="td" style="left:1561.5px;top:591.5px;color:#1a70e2">当前离开区域即将缺员，请注意。</div><div class="td" style="left:1784px;top:591.5px;width:231.5999999999999px;color:#607084">关闭</div><svg class="abs" style="left:1995.1px;top:609.0px" width="9" height="5" viewBox="0 0 9 5"><path d="M0.7 0.7 L4.5 4.4 L8.3 0.7" fill="none" stroke="#98a1ac" stroke-width="1.25"/></svg><div class="td" style="left:2023.6px;top:591.5px;color:#c3c8ce">60</div><div class="hl" style="left:271px;top:630.5px;width:192.5px"></div><div class="hl" style="left:765px;top:630.5px;width:1398px"></div><div class="abs" style="left:280px;top:644.5px;width:14px;height:14px;border:1px solid #dcdfe5;background:#fff;border-radius:1px"></div><div class="td" style="left:311px;top:631.5px">9</div><div class="td" style="left:356px;top:631.5px">规则告警</div><div class="td" style="left:773px;top:631.5px;color:#d5b11c">C级告警</div><div class="td" style="left:872.2px;top:631.5px;width:68.79999999999995px;color:#607084">开启</div><svg class="abs" style="left:923.0px;top:649.0px" width="9" height="5" viewBox="0 0 9 5"><path d="M0.7 0.7 L4.5 4.4 L8.3 0.7" fill="none" stroke="#98a1ac" stroke-width="1.25"/></svg><div class="td" style="left:951.5px;top:631.5px;width:91.40000000000009px;color:#607084">4级</div><svg class="abs" style="left:1023.4000000000001px;top:649.0px" width="9" height="5" viewBox="0 0 9 5"><path d="M0.7 0.7 L4.5 4.4 L8.3 0.7" fill="none" stroke="#98a1ac" stroke-width="1.25"/></svg><div class="td" style="left:1051.9px;top:631.5px;width:70.69999999999982px;color:#607084">开启</div><svg class="abs" style="left:1103.1px;top:649.0px" width="9" height="5" viewBox="0 0 9 5"><path d="M0.7 0.7 L4.5 4.4 L8.3 0.7" fill="none" stroke="#98a1ac" stroke-width="1.25"/></svg><div class="td" style="left:1131.6px;top:631.5px;color:#1a70e2">跟随系统</div><div class="td" style="left:1261.4px;top:631.5px;width:70.59999999999991px;color:#607084">开启</div><svg class="abs" style="left:1312.5px;top:649.0px" width="9" height="5" viewBox="0 0 9 5"><path d="M0.7 0.7 L4.5 4.4 L8.3 0.7" fill="none" stroke="#98a1ac" stroke-width="1.25"/></svg><div class="td" style="left:1341px;top:631.5px;width:101.5px;color:#607084">开启</div><svg class="abs" style="left:1423.0px;top:649.0px" width="9" height="5" viewBox="0 0 9 5"><path d="M0.7 0.7 L4.5 4.4 L8.3 0.7" fill="none" stroke="#98a1ac" stroke-width="1.25"/></svg><div class="td" style="left:1451.5px;top:631.5px;width:101.0px;color:#607084">开启</div><svg class="abs" style="left:1533.0px;top:649.0px" width="9" height="5" viewBox="0 0 9 5"><path d="M0.7 0.7 L4.5 4.4 L8.3 0.7" fill="none" stroke="#98a1ac" stroke-width="1.25"/></svg><div class="td" style="left:1561.5px;top:631.5px;color:#1a70e2">当前离开区域即将缺员，请注意。</div><div class="td" style="left:1784px;top:631.5px;width:231.5999999999999px;color:#607084">关闭</div><svg class="abs" style="left:1995.1px;top:649.0px" width="9" height="5" viewBox="0 0 9 5"><path d="M0.7 0.7 L4.5 4.4 L8.3 0.7" fill="none" stroke="#98a1ac" stroke-width="1.25"/></svg><div class="td" style="left:2023.6px;top:631.5px;color:#c3c8ce">60</div><div class="hl" style="left:271px;top:670.5px;width:1892px"></div><div class="abs" style="left:280px;top:684.5px;width:14px;height:14px;border:1px solid #dcdfe5;background:#fff;border-radius:1px"></div><div class="td" style="left:311px;top:671.5px">10</div><div class="td" style="left:356px;top:671.5px">规则告警</div><div class="td" style="left:472px;top:711.5px">出入口超限</div><div class="abs" style="left:608.3px;top:732.1px;width:6.2px;height:1.4px;background:#1a70e2"></div><div class="abs" style="left:616px;top:732.1px;width:6px;height:1.4px;background:#1a70e2"></div><div class="td" style="left:773px;top:671.5px;color:#ef4a68">A级告警</div><div class="td" style="left:872.2px;top:671.5px;width:68.79999999999995px;color:#607084">开启</div><svg class="abs" style="left:923.0px;top:689.0px" width="9" height="5" viewBox="0 0 9 5"><path d="M0.7 0.7 L4.5 4.4 L8.3 0.7" fill="none" stroke="#98a1ac" stroke-width="1.25"/></svg><div class="td" style="left:951.5px;top:671.5px;width:91.40000000000009px;color:#607084">2级</div><svg class="abs" style="left:1023.4000000000001px;top:689.0px" width="9" height="5" viewBox="0 0 9 5"><path d="M0.7 0.7 L4.5 4.4 L8.3 0.7" fill="none" stroke="#98a1ac" stroke-width="1.25"/></svg><div class="td" style="left:1051.9px;top:671.5px;width:70.69999999999982px;color:#607084">开启</div><svg class="abs" style="left:1103.1px;top:689.0px" width="9" height="5" viewBox="0 0 9 5"><path d="M0.7 0.7 L4.5 4.4 L8.3 0.7" fill="none" stroke="#98a1ac" stroke-width="1.25"/></svg><div class="td" style="left:1131.6px;top:671.5px;color:#1a70e2">跟随系统</div><div class="td" style="left:1261.4px;top:671.5px;width:70.59999999999991px;color:#607084">开启</div><svg class="abs" style="left:1312.5px;top:689.0px" width="9" height="5" viewBox="0 0 9 5"><path d="M0.7 0.7 L4.5 4.4 L8.3 0.7" fill="none" stroke="#98a1ac" stroke-width="1.25"/></svg><div class="td" style="left:1341px;top:671.5px;width:101.5px;color:#607084">开启</div><svg class="abs" style="left:1423.0px;top:689.0px" width="9" height="5" viewBox="0 0 9 5"><path d="M0.7 0.7 L4.5 4.4 L8.3 0.7" fill="none" stroke="#98a1ac" stroke-width="1.25"/></svg><div class="td" style="left:1451.5px;top:671.5px;width:101.0px;color:#607084">开启</div><svg class="abs" style="left:1533.0px;top:689.0px" width="9" height="5" viewBox="0 0 9 5"><path d="M0.7 0.7 L4.5 4.4 L8.3 0.7" fill="none" stroke="#98a1ac" stroke-width="1.25"/></svg><div class="td" style="left:1561.5px;top:671.5px;color:#1a70e2">当前出入口已超限，请注意。</div><div class="td" style="left:1784px;top:671.5px;width:231.5999999999999px;color:#607084">关闭</div><svg class="abs" style="left:1995.1px;top:689.0px" width="9" height="5" viewBox="0 0 9 5"><path d="M0.7 0.7 L4.5 4.4 L8.3 0.7" fill="none" stroke="#98a1ac" stroke-width="1.25"/></svg><div class="td" style="left:2023.6px;top:671.5px;color:#c3c8ce">60</div><div class="hl" style="left:271px;top:710.5px;width:192.5px"></div><div class="hl" style="left:765px;top:710.5px;width:1398px"></div><div class="abs" style="left:280px;top:724.5px;width:14px;height:14px;border:1px solid #dcdfe5;background:#fff;border-radius:1px"></div><div class="td" style="left:311px;top:711.5px">11</div><div class="td" style="left:356px;top:711.5px">规则告警</div><div class="td" style="left:773px;top:711.5px;color:#ee8a35">B级告警</div><div class="td" style="left:872.2px;top:711.5px;width:68.79999999999995px;color:#607084">开启</div><svg class="abs" style="left:923.0px;top:729.0px" width="9" height="5" viewBox="0 0 9 5"><path d="M0.7 0.7 L4.5 4.4 L8.3 0.7" fill="none" stroke="#98a1ac" stroke-width="1.25"/></svg><div class="td" style="left:951.5px;top:711.5px;width:91.40000000000009px;color:#607084">3级</div><svg class="abs" style="left:1023.4000000000001px;top:729.0px" width="9" height="5" viewBox="0 0 9 5"><path d="M0.7 0.7 L4.5 4.4 L8.3 0.7" fill="none" stroke="#98a1ac" stroke-width="1.25"/></svg><div class="td" style="left:1051.9px;top:711.5px;width:70.69999999999982px;color:#607084">开启</div><svg class="abs" style="left:1103.1px;top:729.0px" width="9" height="5" viewBox="0 0 9 5"><path d="M0.7 0.7 L4.5 4.4 L8.3 0.7" fill="none" stroke="#98a1ac" stroke-width="1.25"/></svg><div class="td" style="left:1131.6px;top:711.5px;color:#1a70e2">跟随系统</div><div class="td" style="left:1261.4px;top:711.5px;width:70.59999999999991px;color:#607084">开启</div><svg class="abs" style="left:1312.5px;top:729.0px" width="9" height="5" viewBox="0 0 9 5"><path d="M0.7 0.7 L4.5 4.4 L8.3 0.7" fill="none" stroke="#98a1ac" stroke-width="1.25"/></svg><div class="td" style="left:1341px;top:711.5px;width:101.5px;color:#607084">开启</div><svg class="abs" style="left:1423.0px;top:729.0px" width="9" height="5" viewBox="0 0 9 5"><path d="M0.7 0.7 L4.5 4.4 L8.3 0.7" fill="none" stroke="#98a1ac" stroke-width="1.25"/></svg><div class="td" style="left:1451.5px;top:711.5px;width:101.0px;color:#607084">开启</div><svg class="abs" style="left:1533.0px;top:729.0px" width="9" height="5" viewBox="0 0 9 5"><path d="M0.7 0.7 L4.5 4.4 L8.3 0.7" fill="none" stroke="#98a1ac" stroke-width="1.25"/></svg><div class="td" style="left:1561.5px;top:711.5px;color:#1a70e2">当前出入口即将超限，请注意。</div><div class="td" style="left:1784px;top:711.5px;width:231.5999999999999px;color:#607084">关闭</div><svg class="abs" style="left:1995.1px;top:729.0px" width="9" height="5" viewBox="0 0 9 5"><path d="M0.7 0.7 L4.5 4.4 L8.3 0.7" fill="none" stroke="#98a1ac" stroke-width="1.25"/></svg><div class="td" style="left:2023.6px;top:711.5px;color:#c3c8ce">60</div><div class="hl" style="left:271px;top:750.5px;width:192.5px"></div><div class="hl" style="left:765px;top:750.5px;width:1398px"></div><div class="abs" style="left:280px;top:764.5px;width:14px;height:14px;border:1px solid #dcdfe5;background:#fff;border-radius:1px"></div><div class="td" style="left:311px;top:751.5px">12</div><div class="td" style="left:356px;top:751.5px">规则告警</div><div class="td" style="left:773px;top:751.5px;color:#d5b11c">C级告警</div><div class="td" style="left:872.2px;top:751.5px;width:68.79999999999995px;color:#607084">开启</div><svg class="abs" style="left:923.0px;top:769.0px" width="9" height="5" viewBox="0 0 9 5"><path d="M0.7 0.7 L4.5 4.4 L8.3 0.7" fill="none" stroke="#98a1ac" stroke-width="1.25"/></svg><div class="td" style="left:951.5px;top:751.5px;width:91.40000000000009px;color:#607084">4级</div><svg class="abs" style="left:1023.4000000000001px;top:769.0px" width="9" height="5" viewBox="0 0 9 5"><path d="M0.7 0.7 L4.5 4.4 L8.3 0.7" fill="none" stroke="#98a1ac" stroke-width="1.25"/></svg><div class="td" style="left:1051.9px;top:751.5px;width:70.69999999999982px;color:#607084">开启</div><svg class="abs" style="left:1103.1px;top:769.0px" width="9" height="5" viewBox="0 0 9 5"><path d="M0.7 0.7 L4.5 4.4 L8.3 0.7" fill="none" stroke="#98a1ac" stroke-width="1.25"/></svg><div class="td" style="left:1131.6px;top:751.5px;color:#1a70e2">跟随系统</div><div class="td" style="left:1261.4px;top:751.5px;width:70.59999999999991px;color:#607084">开启</div><svg class="abs" style="left:1312.5px;top:769.0px" width="9" height="5" viewBox="0 0 9 5"><path d="M0.7 0.7 L4.5 4.4 L8.3 0.7" fill="none" stroke="#98a1ac" stroke-width="1.25"/></svg><div class="td" style="left:1341px;top:751.5px;width:101.5px;color:#607084">开启</div><svg class="abs" style="left:1423.0px;top:769.0px" width="9" height="5" viewBox="0 0 9 5"><path d="M0.7 0.7 L4.5 4.4 L8.3 0.7" fill="none" stroke="#98a1ac" stroke-width="1.25"/></svg><div class="td" style="left:1451.5px;top:751.5px;width:101.0px;color:#607084">开启</div><svg class="abs" style="left:1533.0px;top:769.0px" width="9" height="5" viewBox="0 0 9 5"><path d="M0.7 0.7 L4.5 4.4 L8.3 0.7" fill="none" stroke="#98a1ac" stroke-width="1.25"/></svg><div class="td" style="left:1561.5px;top:751.5px;color:#1a70e2">当前出入口即将超限，请注意。</div><div class="td" style="left:1784px;top:751.5px;width:231.5999999999999px;color:#607084">关闭</div><svg class="abs" style="left:1995.1px;top:769.0px" width="9" height="5" viewBox="0 0 9 5"><path d="M0.7 0.7 L4.5 4.4 L8.3 0.7" fill="none" stroke="#98a1ac" stroke-width="1.25"/></svg><div class="td" style="left:2023.6px;top:751.5px;color:#c3c8ce">60</div><div class="hl" style="left:271px;top:790.5px;width:1892px"></div><div class="abs" style="left:280px;top:804.5px;width:14px;height:14px;border:1px solid #dcdfe5;background:#fff;border-radius:1px"></div><div class="td" style="left:311px;top:791.5px">13</div><div class="td" style="left:356px;top:791.5px">规则告警</div><div class="td" style="left:472px;top:831.5px">出入口缺员</div><div class="abs" style="left:608.3px;top:852.1px;width:6.2px;height:1.4px;background:#1a70e2"></div><div class="abs" style="left:616px;top:852.1px;width:6px;height:1.4px;background:#1a70e2"></div><div class="td" style="left:773px;top:791.5px;color:#ef4a68">A级告警</div><div class="td" style="left:872.2px;top:791.5px;width:68.79999999999995px;color:#607084">开启</div><svg class="abs" style="left:923.0px;top:809.0px" width="9" height="5" viewBox="0 0 9 5"><path d="M0.7 0.7 L4.5 4.4 L8.3 0.7" fill="none" stroke="#98a1ac" stroke-width="1.25"/></svg><div class="td" style="left:951.5px;top:791.5px;width:91.40000000000009px;color:#607084">2级</div><svg class="abs" style="left:1023.4000000000001px;top:809.0px" width="9" height="5" viewBox="0 0 9 5"><path d="M0.7 0.7 L4.5 4.4 L8.3 0.7" fill="none" stroke="#98a1ac" stroke-width="1.25"/></svg><div class="td" style="left:1051.9px;top:791.5px;width:70.69999999999982px;color:#607084">开启</div><svg class="abs" style="left:1103.1px;top:809.0px" width="9" height="5" viewBox="0 0 9 5"><path d="M0.7 0.7 L4.5 4.4 L8.3 0.7" fill="none" stroke="#98a1ac" stroke-width="1.25"/></svg><div class="td" style="left:1131.6px;top:791.5px;color:#1a70e2">跟随系统</div><div class="td" style="left:1261.4px;top:791.5px;width:70.59999999999991px;color:#607084">开启</div><svg class="abs" style="left:1312.5px;top:809.0px" width="9" height="5" viewBox="0 0 9 5"><path d="M0.7 0.7 L4.5 4.4 L8.3 0.7" fill="none" stroke="#98a1ac" stroke-width="1.25"/></svg><div class="td" style="left:1341px;top:791.5px;width:101.5px;color:#607084">开启</div><svg class="abs" style="left:1423.0px;top:809.0px" width="9" height="5" viewBox="0 0 9 5"><path d="M0.7 0.7 L4.5 4.4 L8.3 0.7" fill="none" stroke="#98a1ac" stroke-width="1.25"/></svg><div class="td" style="left:1451.5px;top:791.5px;width:101.0px;color:#607084">开启</div><svg class="abs" style="left:1533.0px;top:809.0px" width="9" height="5" viewBox="0 0 9 5"><path d="M0.7 0.7 L4.5 4.4 L8.3 0.7" fill="none" stroke="#98a1ac" stroke-width="1.25"/></svg><div class="td" style="left:1561.5px;top:791.5px;color:#1a70e2">当前出入口已缺员，请注意。</div><div class="td" style="left:1784px;top:791.5px;width:231.5999999999999px;color:#607084">关闭</div><svg class="abs" style="left:1995.1px;top:809.0px" width="9" height="5" viewBox="0 0 9 5"><path d="M0.7 0.7 L4.5 4.4 L8.3 0.7" fill="none" stroke="#98a1ac" stroke-width="1.25"/></svg><div class="td" style="left:2023.6px;top:791.5px;color:#c3c8ce">60</div><div class="hl" style="left:271px;top:830.5px;width:192.5px"></div><div class="hl" style="left:765px;top:830.5px;width:1398px"></div><div class="abs" style="left:280px;top:844.5px;width:14px;height:14px;border:1px solid #dcdfe5;background:#fff;border-radius:1px"></div><div class="td" style="left:311px;top:831.5px">14</div><div class="td" style="left:356px;top:831.5px">规则告警</div><div class="td" style="left:773px;top:831.5px;color:#ee8a35">B级告警</div><div class="td" style="left:872.2px;top:831.5px;width:68.79999999999995px;color:#607084">开启</div><svg class="abs" style="left:923.0px;top:849.0px" width="9" height="5" viewBox="0 0 9 5"><path d="M0.7 0.7 L4.5 4.4 L8.3 0.7" fill="none" stroke="#98a1ac" stroke-width="1.25"/></svg><div class="td" style="left:951.5px;top:831.5px;width:91.40000000000009px;color:#607084">3级</div><svg class="abs" style="left:1023.4000000000001px;top:849.0px" width="9" height="5" viewBox="0 0 9 5"><path d="M0.7 0.7 L4.5 4.4 L8.3 0.7" fill="none" stroke="#98a1ac" stroke-width="1.25"/></svg><div class="td" style="left:1051.9px;top:831.5px;width:70.69999999999982px;color:#607084">开启</div><svg class="abs" style="left:1103.1px;top:849.0px" width="9" height="5" viewBox="0 0 9 5"><path d="M0.7 0.7 L4.5 4.4 L8.3 0.7" fill="none" stroke="#98a1ac" stroke-width="1.25"/></svg><div class="td" style="left:1131.6px;top:831.5px;color:#1a70e2">跟随系统</div><div class="td" style="left:1261.4px;top:831.5px;width:70.59999999999991px;color:#607084">开启</div><svg class="abs" style="left:1312.5px;top:849.0px" width="9" height="5" viewBox="0 0 9 5"><path d="M0.7 0.7 L4.5 4.4 L8.3 0.7" fill="none" stroke="#98a1ac" stroke-width="1.25"/></svg><div class="td" style="left:1341px;top:831.5px;width:101.5px;color:#607084">开启</div><svg class="abs" style="left:1423.0px;top:849.0px" width="9" height="5" viewBox="0 0 9 5"><path d="M0.7 0.7 L4.5 4.4 L8.3 0.7" fill="none" stroke="#98a1ac" stroke-width="1.25"/></svg><div class="td" style="left:1451.5px;top:831.5px;width:101.0px;color:#607084">开启</div><svg class="abs" style="left:1533.0px;top:849.0px" width="9" height="5" viewBox="0 0 9 5"><path d="M0.7 0.7 L4.5 4.4 L8.3 0.7" fill="none" stroke="#98a1ac" stroke-width="1.25"/></svg><div class="td" style="left:1561.5px;top:831.5px;color:#1a70e2">当前出入口即将缺员，请注意。</div><div class="td" style="left:1784px;top:831.5px;width:231.5999999999999px;color:#607084">关闭</div><svg class="abs" style="left:1995.1px;top:849.0px" width="9" height="5" viewBox="0 0 9 5"><path d="M0.7 0.7 L4.5 4.4 L8.3 0.7" fill="none" stroke="#98a1ac" stroke-width="1.25"/></svg><div class="td" style="left:2023.6px;top:831.5px;color:#c3c8ce">60</div><div class="hl" style="left:271px;top:870.5px;width:192.5px"></div><div class="hl" style="left:765px;top:870.5px;width:1398px"></div><div class="abs" style="left:280px;top:884.5px;width:14px;height:14px;border:1px solid #dcdfe5;background:#fff;border-radius:1px"></div><div class="td" style="left:311px;top:871.5px">15</div><div class="td" style="left:356px;top:871.5px">规则告警</div><div class="td" style="left:773px;top:871.5px;color:#d5b11c">C级告警</div><div class="td" style="left:872.2px;top:871.5px;width:68.79999999999995px;color:#607084">开启</div><svg class="abs" style="left:923.0px;top:889.0px" width="9" height="5" viewBox="0 0 9 5"><path d="M0.7 0.7 L4.5 4.4 L8.3 0.7" fill="none" stroke="#98a1ac" stroke-width="1.25"/></svg><div class="td" style="left:951.5px;top:871.5px;width:91.40000000000009px;color:#607084">4级</div><svg class="abs" style="left:1023.4000000000001px;top:889.0px" width="9" height="5" viewBox="0 0 9 5"><path d="M0.7 0.7 L4.5 4.4 L8.3 0.7" fill="none" stroke="#98a1ac" stroke-width="1.25"/></svg><div class="td" style="left:1051.9px;top:871.5px;width:70.69999999999982px;color:#607084">开启</div><svg class="abs" style="left:1103.1px;top:889.0px" width="9" height="5" viewBox="0 0 9 5"><path d="M0.7 0.7 L4.5 4.4 L8.3 0.7" fill="none" stroke="#98a1ac" stroke-width="1.25"/></svg><div class="td" style="left:1131.6px;top:871.5px;color:#1a70e2">跟随系统</div><div class="td" style="left:1261.4px;top:871.5px;width:70.59999999999991px;color:#607084">开启</div><svg class="abs" style="left:1312.5px;top:889.0px" width="9" height="5" viewBox="0 0 9 5"><path d="M0.7 0.7 L4.5 4.4 L8.3 0.7" fill="none" stroke="#98a1ac" stroke-width="1.25"/></svg><div class="td" style="left:1341px;top:871.5px;width:101.5px;color:#607084">开启</div><svg class="abs" style="left:1423.0px;top:889.0px" width="9" height="5" viewBox="0 0 9 5"><path d="M0.7 0.7 L4.5 4.4 L8.3 0.7" fill="none" stroke="#98a1ac" stroke-width="1.25"/></svg><div class="td" style="left:1451.5px;top:871.5px;width:101.0px;color:#607084">开启</div><svg class="abs" style="left:1533.0px;top:889.0px" width="9" height="5" viewBox="0 0 9 5"><path d="M0.7 0.7 L4.5 4.4 L8.3 0.7" fill="none" stroke="#98a1ac" stroke-width="1.25"/></svg><div class="td" style="left:1561.5px;top:871.5px;color:#1a70e2">当前出入口即将缺员，请注意。</div><div class="td" style="left:1784px;top:871.5px;width:231.5999999999999px;color:#607084">关闭</div><svg class="abs" style="left:1995.1px;top:889.0px" width="9" height="5" viewBox="0 0 9 5"><path d="M0.7 0.7 L4.5 4.4 L8.3 0.7" fill="none" stroke="#98a1ac" stroke-width="1.25"/></svg><div class="td" style="left:2023.6px;top:871.5px;color:#c3c8ce">60</div><div class="hl" style="left:271px;top:910.5px;width:1892px"></div><div class="abs" style="left:280px;top:924.5px;width:14px;height:14px;border:1px solid #dcdfe5;background:#fff;border-radius:1px"></div><div class="td" style="left:311px;top:911.5px">16</div><div class="td" style="left:356px;top:911.5px">规则告警</div><div class="td" style="left:472px;top:911.5px">安全区域</div><div class="abs" style="left:608.3px;top:932.1px;width:6.2px;height:1.4px;background:#1a70e2"></div><div class="abs" style="left:616px;top:932.1px;width:6px;height:1.4px;background:#1a70e2"></div><div class="td" style="left:773px;top:911.5px;color:#ef4a68">A级告警</div><div class="td" style="left:872.2px;top:911.5px;width:68.79999999999995px;color:#607084">开启</div><svg class="abs" style="left:923.0px;top:929.0px" width="9" height="5" viewBox="0 0 9 5"><path d="M0.7 0.7 L4.5 4.4 L8.3 0.7" fill="none" stroke="#98a1ac" stroke-width="1.25"/></svg><div class="td" style="left:951.5px;top:911.5px;width:91.40000000000009px;color:#607084">1级</div><svg class="abs" style="left:1023.4000000000001px;top:929.0px" width="9" height="5" viewBox="0 0 9 5"><path d="M0.7 0.7 L4.5 4.4 L8.3 0.7" fill="none" stroke="#98a1ac" stroke-width="1.25"/></svg><div class="td" style="left:1051.9px;top:911.5px;width:70.69999999999982px;color:#607084">开启</div><svg class="abs" style="left:1103.1px;top:929.0px" width="9" height="5" viewBox="0 0 9 5"><path d="M0.7 0.7 L4.5 4.4 L8.3 0.7" fill="none" stroke="#98a1ac" stroke-width="1.25"/></svg><div class="td" style="left:1131.6px;top:911.5px;color:#1a70e2">跟随系统</div><div class="td" style="left:1261.4px;top:911.5px;width:70.59999999999991px;color:#607084">开启</div><svg class="abs" style="left:1312.5px;top:929.0px" width="9" height="5" viewBox="0 0 9 5"><path d="M0.7 0.7 L4.5 4.4 L8.3 0.7" fill="none" stroke="#98a1ac" stroke-width="1.25"/></svg><div class="td" style="left:1341px;top:911.5px;width:101.5px;color:#607084">开启</div><svg class="abs" style="left:1423.0px;top:929.0px" width="9" height="5" viewBox="0 0 9 5"><path d="M0.7 0.7 L4.5 4.4 L8.3 0.7" fill="none" stroke="#98a1ac" stroke-width="1.25"/></svg><div class="td" style="left:1451.5px;top:911.5px;width:101.0px;color:#607084">开启</div><svg class="abs" style="left:1533.0px;top:929.0px" width="9" height="5" viewBox="0 0 9 5"><path d="M0.7 0.7 L4.5 4.4 L8.3 0.7" fill="none" stroke="#98a1ac" stroke-width="1.25"/></svg><div class="td" style="left:1561.5px;top:911.5px;color:#1a70e2">已进入紧急撤离状态，请前往安全区...</div><div class="td" style="left:1784px;top:911.5px;width:231.5999999999999px;color:#607084">关闭</div><svg class="abs" style="left:1995.1px;top:929.0px" width="9" height="5" viewBox="0 0 9 5"><path d="M0.7 0.7 L4.5 4.4 L8.3 0.7" fill="none" stroke="#98a1ac" stroke-width="1.25"/></svg><div class="td" style="left:2023.6px;top:911.5px;color:#c3c8ce">60</div><div class="hl" style="left:271px;top:950.5px;width:1892px"></div><div class="abs" style="left:280px;top:964.5px;width:14px;height:14px;border:1px solid #dcdfe5;background:#fff;border-radius:1px"></div><div class="td" style="left:311px;top:951.5px">17</div><div class="td" style="left:356px;top:951.5px">规则告警</div><div class="td" style="left:472px;top:991.5px">区域超时</div><div class="abs" style="left:608.3px;top:1012.1px;width:6.2px;height:1.4px;background:#1a70e2"></div><div class="abs" style="left:616px;top:1012.1px;width:6px;height:1.4px;background:#1a70e2"></div><div class="td" style="left:773px;top:951.5px;color:#ef4a68">A级告警</div><div class="td" style="left:872.2px;top:951.5px;width:68.79999999999995px;color:#607084">开启</div><svg class="abs" style="left:923.0px;top:969.0px" width="9" height="5" viewBox="0 0 9 5"><path d="M0.7 0.7 L4.5 4.4 L8.3 0.7" fill="none" stroke="#98a1ac" stroke-width="1.25"/></svg><div class="td" style="left:951.5px;top:951.5px;width:91.40000000000009px;color:#607084">2级</div><svg class="abs" style="left:1023.4000000000001px;top:969.0px" width="9" height="5" viewBox="0 0 9 5"><path d="M0.7 0.7 L4.5 4.4 L8.3 0.7" fill="none" stroke="#98a1ac" stroke-width="1.25"/></svg><div class="td" style="left:1051.9px;top:951.5px;width:70.69999999999982px;color:#607084">开启</div><svg class="abs" style="left:1103.1px;top:969.0px" width="9" height="5" viewBox="0 0 9 5"><path d="M0.7 0.7 L4.5 4.4 L8.3 0.7" fill="none" stroke="#98a1ac" stroke-width="1.25"/></svg><div class="td" style="left:1131.6px;top:951.5px;color:#1a70e2">跟随系统</div><div class="td" style="left:1261.4px;top:951.5px;width:70.59999999999991px;color:#607084">开启</div><svg class="abs" style="left:1312.5px;top:969.0px" width="9" height="5" viewBox="0 0 9 5"><path d="M0.7 0.7 L4.5 4.4 L8.3 0.7" fill="none" stroke="#98a1ac" stroke-width="1.25"/></svg><div class="td" style="left:1341px;top:951.5px;width:101.5px;color:#607084">开启</div><svg class="abs" style="left:1423.0px;top:969.0px" width="9" height="5" viewBox="0 0 9 5"><path d="M0.7 0.7 L4.5 4.4 L8.3 0.7" fill="none" stroke="#98a1ac" stroke-width="1.25"/></svg><div class="td" style="left:1451.5px;top:951.5px;width:101.0px;color:#607084">开启</div><svg class="abs" style="left:1533.0px;top:969.0px" width="9" height="5" viewBox="0 0 9 5"><path d="M0.7 0.7 L4.5 4.4 L8.3 0.7" fill="none" stroke="#98a1ac" stroke-width="1.25"/></svg><div class="td" style="left:1561.5px;top:951.5px;color:#1a70e2">当前区域已超时滞留，请注意。</div><div class="td" style="left:1784px;top:951.5px;width:231.5999999999999px;color:#607084">关闭</div><svg class="abs" style="left:1995.1px;top:969.0px" width="9" height="5" viewBox="0 0 9 5"><path d="M0.7 0.7 L4.5 4.4 L8.3 0.7" fill="none" stroke="#98a1ac" stroke-width="1.25"/></svg><div class="td" style="left:2023.6px;top:951.5px;color:#c3c8ce">60</div><div class="hl" style="left:271px;top:990.5px;width:192.5px"></div><div class="hl" style="left:765px;top:990.5px;width:1398px"></div><div class="abs" style="left:280px;top:1004.5px;width:14px;height:14px;border:1px solid #dcdfe5;background:#fff;border-radius:1px"></div><div class="td" style="left:311px;top:991.5px">18</div><div class="td" style="left:356px;top:991.5px">规则告警</div><div class="td" style="left:773px;top:991.5px;color:#ee8a35">B级告警</div><div class="td" style="left:872.2px;top:991.5px;width:68.79999999999995px;color:#607084">开启</div><svg class="abs" style="left:923.0px;top:1009.0px" width="9" height="5" viewBox="0 0 9 5"><path d="M0.7 0.7 L4.5 4.4 L8.3 0.7" fill="none" stroke="#98a1ac" stroke-width="1.25"/></svg><div class="td" style="left:951.5px;top:991.5px;width:91.40000000000009px;color:#607084">3级</div><svg class="abs" style="left:1023.4000000000001px;top:1009.0px" width="9" height="5" viewBox="0 0 9 5"><path d="M0.7 0.7 L4.5 4.4 L8.3 0.7" fill="none" stroke="#98a1ac" stroke-width="1.25"/></svg><div class="td" style="left:1051.9px;top:991.5px;width:70.69999999999982px;color:#607084">开启</div><svg class="abs" style="left:1103.1px;top:1009.0px" width="9" height="5" viewBox="0 0 9 5"><path d="M0.7 0.7 L4.5 4.4 L8.3 0.7" fill="none" stroke="#98a1ac" stroke-width="1.25"/></svg><div class="td" style="left:1131.6px;top:991.5px;color:#1a70e2">跟随系统</div><div class="td" style="left:1261.4px;top:991.5px;width:70.59999999999991px;color:#607084">开启</div><svg class="abs" style="left:1312.5px;top:1009.0px" width="9" height="5" viewBox="0 0 9 5"><path d="M0.7 0.7 L4.5 4.4 L8.3 0.7" fill="none" stroke="#98a1ac" stroke-width="1.25"/></svg><div class="td" style="left:1341px;top:991.5px;width:101.5px;color:#607084">开启</div><svg class="abs" style="left:1423.0px;top:1009.0px" width="9" height="5" viewBox="0 0 9 5"><path d="M0.7 0.7 L4.5 4.4 L8.3 0.7" fill="none" stroke="#98a1ac" stroke-width="1.25"/></svg><div class="td" style="left:1451.5px;top:991.5px;width:101.0px;color:#607084">开启</div><svg class="abs" style="left:1533.0px;top:1009.0px" width="9" height="5" viewBox="0 0 9 5"><path d="M0.7 0.7 L4.5 4.4 L8.3 0.7" fill="none" stroke="#98a1ac" stroke-width="1.25"/></svg><div class="td" style="left:1561.5px;top:991.5px;color:#1a70e2">当前区域即将超时滞留，请注意。</div><div class="td" style="left:1784px;top:991.5px;width:231.5999999999999px;color:#607084">关闭</div><svg class="abs" style="left:1995.1px;top:1009.0px" width="9" height="5" viewBox="0 0 9 5"><path d="M0.7 0.7 L4.5 4.4 L8.3 0.7" fill="none" stroke="#98a1ac" stroke-width="1.25"/></svg><div class="td" style="left:2023.6px;top:991.5px;color:#c3c8ce">60</div><div class="hl" style="left:271px;top:1030.5px;width:192.5px"></div><div class="hl" style="left:765px;top:1030.5px;width:1398px"></div><div class="abs" style="left:280px;top:1044.5px;width:14px;height:14px;border:1px solid #dcdfe5;background:#fff;border-radius:1px"></div><div class="td" style="left:311px;top:1031.5px">19</div><div class="td" style="left:356px;top:1031.5px">规则告警</div><div class="td" style="left:773px;top:1031.5px;color:#d5b11c">C级告警</div><div class="td" style="left:872.2px;top:1031.5px;width:68.79999999999995px;color:#607084">开启</div><svg class="abs" style="left:923.0px;top:1049.0px" width="9" height="5" viewBox="0 0 9 5"><path d="M0.7 0.7 L4.5 4.4 L8.3 0.7" fill="none" stroke="#98a1ac" stroke-width="1.25"/></svg><div class="td" style="left:951.5px;top:1031.5px;width:91.40000000000009px;color:#607084">4级</div><svg class="abs" style="left:1023.4000000000001px;top:1049.0px" width="9" height="5" viewBox="0 0 9 5"><path d="M0.7 0.7 L4.5 4.4 L8.3 0.7" fill="none" stroke="#98a1ac" stroke-width="1.25"/></svg><div class="td" style="left:1051.9px;top:1031.5px;width:70.69999999999982px;color:#607084">开启</div><svg class="abs" style="left:1103.1px;top:1049.0px" width="9" height="5" viewBox="0 0 9 5"><path d="M0.7 0.7 L4.5 4.4 L8.3 0.7" fill="none" stroke="#98a1ac" stroke-width="1.25"/></svg><div class="td" style="left:1131.6px;top:1031.5px;color:#1a70e2">跟随系统</div><div class="td" style="left:1261.4px;top:1031.5px;width:70.59999999999991px;color:#607084">开启</div><svg class="abs" style="left:1312.5px;top:1049.0px" width="9" height="5" viewBox="0 0 9 5"><path d="M0.7 0.7 L4.5 4.4 L8.3 0.7" fill="none" stroke="#98a1ac" stroke-width="1.25"/></svg><div class="td" style="left:1341px;top:1031.5px;width:101.5px;color:#607084">开启</div><svg class="abs" style="left:1423.0px;top:1049.0px" width="9" height="5" viewBox="0 0 9 5"><path d="M0.7 0.7 L4.5 4.4 L8.3 0.7" fill="none" stroke="#98a1ac" stroke-width="1.25"/></svg><div class="td" style="left:1451.5px;top:1031.5px;width:101.0px;color:#607084">开启</div><svg class="abs" style="left:1533.0px;top:1049.0px" width="9" height="5" viewBox="0 0 9 5"><path d="M0.7 0.7 L4.5 4.4 L8.3 0.7" fill="none" stroke="#98a1ac" stroke-width="1.25"/></svg><div class="td" style="left:1561.5px;top:1031.5px;color:#1a70e2">当前区域即将超时滞留，请注意。</div><div class="td" style="left:1784px;top:1031.5px;width:231.5999999999999px;color:#607084">关闭</div><svg class="abs" style="left:1995.1px;top:1049.0px" width="9" height="5" viewBox="0 0 9 5"><path d="M0.7 0.7 L4.5 4.4 L8.3 0.7" fill="none" stroke="#98a1ac" stroke-width="1.25"/></svg><div class="td" style="left:2023.6px;top:1031.5px;color:#c3c8ce">60</div><div class="hl" style="left:271px;top:1070.5px;width:1892px"></div><div class="abs" style="left:280px;top:1084.5px;width:14px;height:14px;border:1px solid #dcdfe5;background:#fff;border-radius:1px"></div><div class="td" style="left:311px;top:1071.5px">20</div><div class="td" style="left:356px;top:1071.5px">规则告警</div><div class="td" style="left:472px;top:1111.5px">区域超时</div><div class="abs" style="left:608.3px;top:1132.1px;width:6.2px;height:1.4px;background:#1a70e2"></div><div class="abs" style="left:616px;top:1132.1px;width:6px;height:1.4px;background:#1a70e2"></div><div class="td" style="left:773px;top:1071.5px;color:#ef4a68">A级告警</div><div class="td" style="left:872.2px;top:1071.5px;width:68.79999999999995px;color:#607084">开启</div><svg class="abs" style="left:923.0px;top:1089.0px" width="9" height="5" viewBox="0 0 9 5"><path d="M0.7 0.7 L4.5 4.4 L8.3 0.7" fill="none" stroke="#98a1ac" stroke-width="1.25"/></svg><div class="td" style="left:951.5px;top:1071.5px;width:91.40000000000009px;color:#607084">3级</div><svg class="abs" style="left:1023.4000000000001px;top:1089.0px" width="9" height="5" viewBox="0 0 9 5"><path d="M0.7 0.7 L4.5 4.4 L8.3 0.7" fill="none" stroke="#98a1ac" stroke-width="1.25"/></svg><div class="td" style="left:1051.9px;top:1071.5px;width:70.69999999999982px;color:#607084">开启</div><svg class="abs" style="left:1103.1px;top:1089.0px" width="9" height="5" viewBox="0 0 9 5"><path d="M0.7 0.7 L4.5 4.4 L8.3 0.7" fill="none" stroke="#98a1ac" stroke-width="1.25"/></svg><div class="td" style="left:1131.6px;top:1071.5px;color:#1a70e2">跟随系统</div><div class="td" style="left:1261.4px;top:1071.5px;width:70.59999999999991px;color:#607084">开启</div><svg class="abs" style="left:1312.5px;top:1089.0px" width="9" height="5" viewBox="0 0 9 5"><path d="M0.7 0.7 L4.5 4.4 L8.3 0.7" fill="none" stroke="#98a1ac" stroke-width="1.25"/></svg><div class="td" style="left:1341px;top:1071.5px;width:101.5px;color:#607084">开启</div><svg class="abs" style="left:1423.0px;top:1089.0px" width="9" height="5" viewBox="0 0 9 5"><path d="M0.7 0.7 L4.5 4.4 L8.3 0.7" fill="none" stroke="#98a1ac" stroke-width="1.25"/></svg><div class="td" style="left:1451.5px;top:1071.5px;width:101.0px;color:#607084">开启</div><svg class="abs" style="left:1533.0px;top:1089.0px" width="9" height="5" viewBox="0 0 9 5"><path d="M0.7 0.7 L4.5 4.4 L8.3 0.7" fill="none" stroke="#98a1ac" stroke-width="1.25"/></svg><div class="td" style="left:1561.5px;top:1071.5px;color:#1a70e2">未在规定时间返回禁止离开区域，请...</div><div class="td" style="left:1784px;top:1071.5px;width:231.5999999999999px;color:#607084">关闭</div><svg class="abs" style="left:1995.1px;top:1089.0px" width="9" height="5" viewBox="0 0 9 5"><path d="M0.7 0.7 L4.5 4.4 L8.3 0.7" fill="none" stroke="#98a1ac" stroke-width="1.25"/></svg><div class="td" style="left:2023.6px;top:1071.5px;color:#c3c8ce">60</div><div class="hl" style="left:271px;top:1110.5px;width:192.5px"></div><div class="hl" style="left:765px;top:1110.5px;width:1398px"></div><div class="abs" style="left:280px;top:1124.5px;width:14px;height:14px;border:1px solid #dcdfe5;background:#fff;border-radius:1px"></div><div class="td" style="left:311px;top:1111.5px">21</div><div class="td" style="left:356px;top:1111.5px">规则告警</div><div class="td" style="left:773px;top:1111.5px;color:#ee8a35">B级告警</div><div class="td" style="left:872.2px;top:1111.5px;width:68.79999999999995px;color:#607084">开启</div><svg class="abs" style="left:923.0px;top:1129.0px" width="9" height="5" viewBox="0 0 9 5"><path d="M0.7 0.7 L4.5 4.4 L8.3 0.7" fill="none" stroke="#98a1ac" stroke-width="1.25"/></svg><div class="td" style="left:951.5px;top:1111.5px;width:91.40000000000009px;color:#607084">4级</div><svg class="abs" style="left:1023.4000000000001px;top:1129.0px" width="9" height="5" viewBox="0 0 9 5"><path d="M0.7 0.7 L4.5 4.4 L8.3 0.7" fill="none" stroke="#98a1ac" stroke-width="1.25"/></svg><div class="td" style="left:1051.9px;top:1111.5px;width:70.69999999999982px;color:#607084">开启</div><svg class="abs" style="left:1103.1px;top:1129.0px" width="9" height="5" viewBox="0 0 9 5"><path d="M0.7 0.7 L4.5 4.4 L8.3 0.7" fill="none" stroke="#98a1ac" stroke-width="1.25"/></svg><div class="td" style="left:1131.6px;top:1111.5px;color:#1a70e2">跟随系统</div><div class="td" style="left:1261.4px;top:1111.5px;width:70.59999999999991px;color:#607084">开启</div><svg class="abs" style="left:1312.5px;top:1129.0px" width="9" height="5" viewBox="0 0 9 5"><path d="M0.7 0.7 L4.5 4.4 L8.3 0.7" fill="none" stroke="#98a1ac" stroke-width="1.25"/></svg><div class="td" style="left:1341px;top:1111.5px;width:101.5px;color:#607084">开启</div><svg class="abs" style="left:1423.0px;top:1129.0px" width="9" height="5" viewBox="0 0 9 5"><path d="M0.7 0.7 L4.5 4.4 L8.3 0.7" fill="none" stroke="#98a1ac" stroke-width="1.25"/></svg><div class="td" style="left:1451.5px;top:1111.5px;width:101.0px;color:#607084">开启</div><svg class="abs" style="left:1533.0px;top:1129.0px" width="9" height="5" viewBox="0 0 9 5"><path d="M0.7 0.7 L4.5 4.4 L8.3 0.7" fill="none" stroke="#98a1ac" stroke-width="1.25"/></svg><div class="td" style="left:1561.5px;top:1111.5px;color:#1a70e2">未在规定时间返回禁止离开区域，请...</div><div class="td" style="left:1784px;top:1111.5px;width:231.5999999999999px;color:#607084">关闭</div><svg class="abs" style="left:1995.1px;top:1129.0px" width="9" height="5" viewBox="0 0 9 5"><path d="M0.7 0.7 L4.5 4.4 L8.3 0.7" fill="none" stroke="#98a1ac" stroke-width="1.25"/></svg><div class="td" style="left:2023.6px;top:1111.5px;color:#c3c8ce">60</div><div class="hl" style="left:271px;top:1150.5px;width:192.5px"></div><div class="hl" style="left:765px;top:1150.5px;width:1398px"></div><div class="vl" style="left:301.5px;top:279px;height:843px"></div><div class="vl" style="left:346.5px;top:279px;height:843px"></div><div class="vl" style="left:463.0px;top:279px;height:843px"></div><div class="vl" style="left:598.8px;top:279px;height:843px"></div><div class="vl" style="left:764.5px;top:279px;height:843px"></div><div class="abs" style="left:865px;top:279px;width:10px;height:843px;background:linear-gradient(to right,rgba(0,0,0,0.05),rgba(0,0,0,0))"></div><div class="vl" style="left:943.0px;top:279px;height:843px"></div><div class="vl" style="left:1043.4px;top:279px;height:843px"></div><div class="vl" style="left:1123.1px;top:279px;height:843px"></div><div class="vl" style="left:1252.9px;top:279px;height:843px"></div><div class="vl" style="left:1332.5px;top:279px;height:843px"></div><div class="vl" style="left:1443.0px;top:279px;height:843px"></div><div class="vl" style="left:1553.0px;top:279px;height:843px"></div><div class="vl" style="left:1774.5px;top:279px;height:843px"></div><div class="vl" style="left:2015.1px;top:279px;height:843px"></div><div class="vl" style="left:271px;top:279px;height:843px"></div><div class="hl" style="left:271px;top:279px;width:1897.5px;background:#eaedf0"></div><div class="vl" style="left:2168px;top:312px;height:810px"></div><div class="abs" style="left:2163px;top:312px;width:5px;height:271px;background:#dcdcdc;border-radius:3px"></div>
</div>
</body></html>
